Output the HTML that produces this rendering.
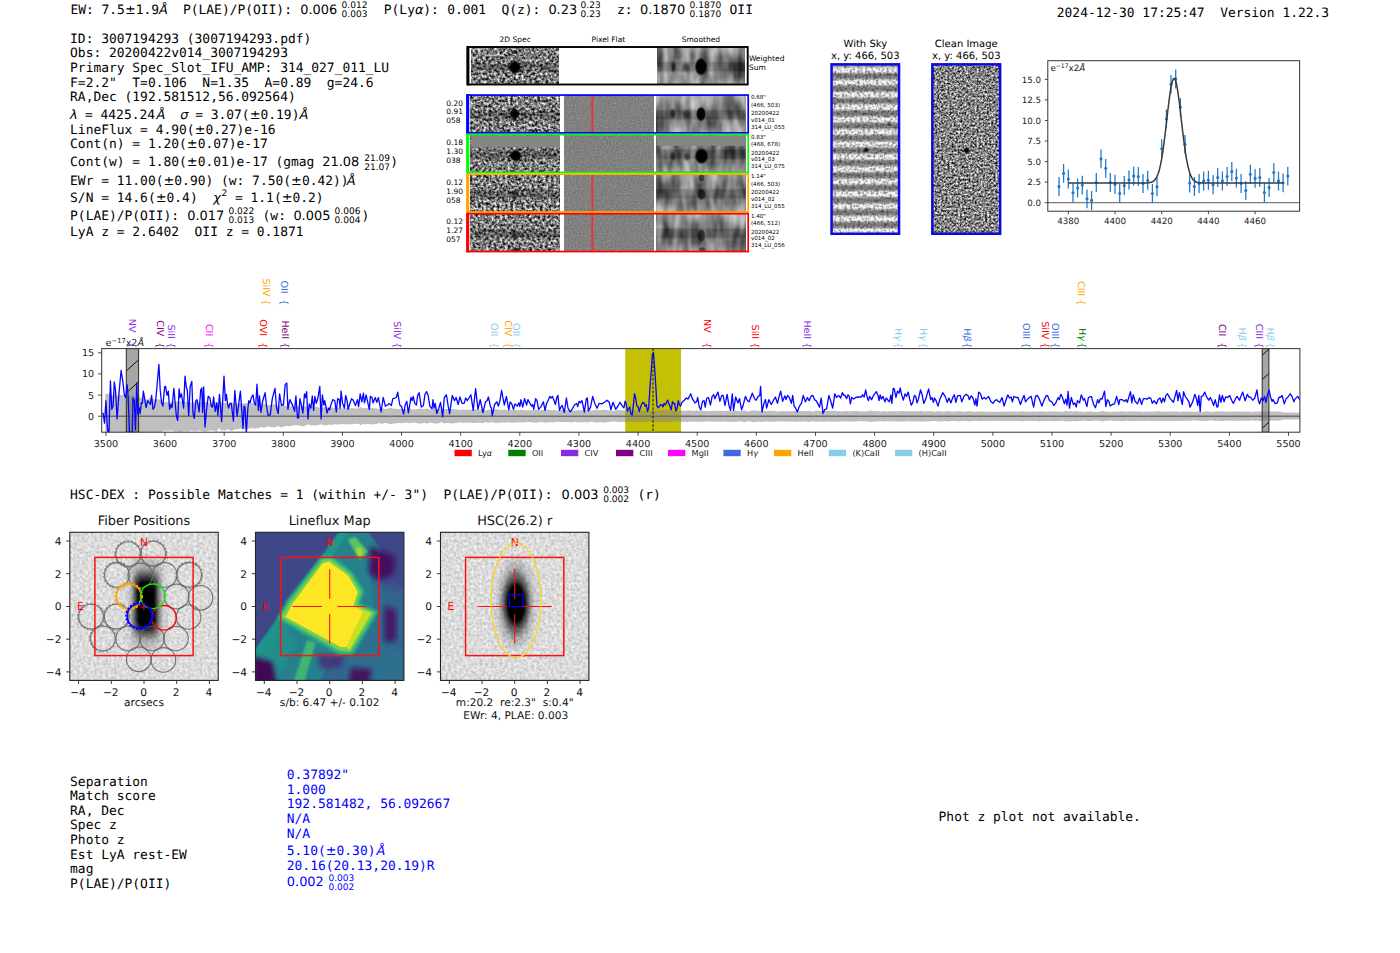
<!DOCTYPE html>
<html lang="en"><head><meta charset="utf-8"><title>ELiXer detection report 3007194293</title>
<style>
html,body{margin:0;padding:0;background:#fff;}
body{width:1400px;height:953px;overflow:hidden;}
svg{display:block;}
text{white-space:pre;text-rendering:geometricPrecision;}
</style></head><body>
<svg width="1400" height="953" viewBox="0 0 1400 953">
<defs>
<filter id="nHC" x="0" y="0" width="100%" height="100%" color-interpolation-filters="sRGB">
 <feTurbulence type="fractalNoise" baseFrequency="0.37" numOctaves="2" seed="7"/>
 <feColorMatrix type="matrix" values="1.7 0 0 0 -0.36  1.7 0 0 0 -0.36  1.7 0 0 0 -0.36  0 0 0 0 1"/><feGaussianBlur stdDeviation="0.45"/>
</filter>
<filter id="nHC2" x="0" y="0" width="100%" height="100%" color-interpolation-filters="sRGB">
 <feTurbulence type="fractalNoise" baseFrequency="0.37" numOctaves="2" seed="23"/>
 <feColorMatrix type="matrix" values="1.7 0 0 0 -0.36  1.7 0 0 0 -0.36  1.7 0 0 0 -0.36  0 0 0 0 1"/><feGaussianBlur stdDeviation="0.45"/>
</filter>
<filter id="nClean" x="0" y="0" width="100%" height="100%" color-interpolation-filters="sRGB">
 <feTurbulence type="fractalNoise" baseFrequency="0.48" numOctaves="2" seed="11"/>
 <feColorMatrix type="matrix" values="1.6 0 0 0 -0.285  1.6 0 0 0 -0.285  1.6 0 0 0 -0.285  0 0 0 0 1"/><feGaussianBlur stdDeviation="0.5"/>
</filter>
<filter id="nSm" x="0" y="0" width="100%" height="100%" color-interpolation-filters="sRGB">
 <feTurbulence type="fractalNoise" baseFrequency="0.11 0.035" numOctaves="2" seed="5"/>
 <feColorMatrix type="matrix" values="0.95 0 0 0 -0.03  0.95 0 0 0 -0.03  0.95 0 0 0 -0.03  0 0 0 0 1"/>
</filter>
<filter id="nSm2" x="0" y="0" width="100%" height="100%" color-interpolation-filters="sRGB">
 <feTurbulence type="fractalNoise" baseFrequency="0.11 0.035" numOctaves="2" seed="31"/>
 <feColorMatrix type="matrix" values="0.95 0 0 0 -0.03  0.95 0 0 0 -0.03  0.95 0 0 0 -0.03  0 0 0 0 1"/>
</filter>
<filter id="nFlat" x="0" y="0" width="100%" height="100%" color-interpolation-filters="sRGB">
 <feTurbulence type="fractalNoise" baseFrequency="0.6" numOctaves="1" seed="2"/>
 <feColorMatrix type="matrix" values="0.22 0 0 0 0.395  0.22 0 0 0 0.395  0.22 0 0 0 0.395  0 0 0 0 1"/>
</filter>
<filter id="nSky" x="0" y="0" width="100%" height="100%" color-interpolation-filters="sRGB">
 <feTurbulence type="fractalNoise" baseFrequency="0.38" numOctaves="2" seed="13"/>
 <feColorMatrix type="matrix" values="0 0 0 0 0  0 0 0 0 0  0 0 0 0 0  1.25 0 0 0 -0.52"/><feGaussianBlur stdDeviation="0.5"/>
</filter>
<filter id="nBg" x="0" y="0" width="100%" height="100%" color-interpolation-filters="sRGB">
 <feTurbulence type="fractalNoise" baseFrequency="0.35" numOctaves="2" seed="17"/>
 <feColorMatrix type="matrix" values="0.32 0 0 0 0.7  0.32 0 0 0 0.7  0.32 0 0 0 0.7  0 0 0 0 1"/>
</filter>
<filter id="nBg2" x="0" y="0" width="100%" height="100%" color-interpolation-filters="sRGB">
 <feTurbulence type="fractalNoise" baseFrequency="0.35" numOctaves="2" seed="41"/>
 <feColorMatrix type="matrix" values="0.32 0 0 0 0.7  0.32 0 0 0 0.7  0.32 0 0 0 0.7  0 0 0 0 1"/>
</filter>
<filter id="blur1" x="-20%" y="-20%" width="140%" height="140%"><feGaussianBlur stdDeviation="1.2"/></filter>
<filter id="blur2" x="-20%" y="-20%" width="140%" height="140%"><feGaussianBlur stdDeviation="2.5"/></filter>
<filter id="blur4" x="-30%" y="-30%" width="160%" height="160%"><feGaussianBlur stdDeviation="4.5"/></filter>
<linearGradient id="skyStripe" gradientUnits="userSpaceOnUse" x1="0" y1="63.6" x2="0" y2="76" spreadMethod="repeat">
 <stop offset="0" stop-color="#7e7e7e"/><stop offset="0.16" stop-color="#8c8c8c"/><stop offset="0.38" stop-color="#f6f6f6"/><stop offset="0.64" stop-color="#f6f6f6"/><stop offset="0.86" stop-color="#8c8c8c"/><stop offset="1" stop-color="#7e7e7e"/>
</linearGradient>
<radialGradient id="blob"><stop offset="0" stop-color="#000" stop-opacity="1"/><stop offset="0.38" stop-color="#000" stop-opacity="1"/><stop offset="0.6" stop-color="#000" stop-opacity="0.55"/><stop offset="0.8" stop-color="#000" stop-opacity="0.18"/><stop offset="1" stop-color="#000" stop-opacity="0"/></radialGradient>
<radialGradient id="blobS"><stop offset="0" stop-color="#000" stop-opacity="1"/><stop offset="0.7" stop-color="#000" stop-opacity="0.97"/><stop offset="1" stop-color="#000" stop-opacity="0"/></radialGradient>
<pattern id="hatch" patternUnits="userSpaceOnUse" width="12.3" height="21.2" x="126.3" y="348.6">
 <path d="M0,25.2 L12.3,14 M0,4 L12.3,-7.2 M0,46.4 L12.3,35.2" stroke="#000" stroke-width="1" fill="none"/>
</pattern>
<linearGradient id="band" x1="0" y1="0" x2="0" y2="1">
 <stop offset="0" stop-color="#fff" stop-opacity="0.28"/><stop offset="0.3" stop-color="#fff" stop-opacity="0.05"/><stop offset="0.42" stop-color="#000" stop-opacity="0.22"/><stop offset="0.62" stop-color="#000" stop-opacity="0.22"/><stop offset="0.75" stop-color="#fff" stop-opacity="0.05"/><stop offset="1" stop-color="#fff" stop-opacity="0.28"/>
</linearGradient>
<linearGradient id="band2" x1="0" y1="0" x2="0" y2="1">
 <stop offset="0.36" stop-color="#000" stop-opacity="0"/><stop offset="0.46" stop-color="#000" stop-opacity="0.25"/><stop offset="0.6" stop-color="#000" stop-opacity="0.25"/><stop offset="0.7" stop-color="#000" stop-opacity="0"/>
</linearGradient>
</defs>

<rect x="0" y="0" width="1400" height="953" fill="#fff"/>
<text x="70.40" y="14.00" font-family="'DejaVu Sans Mono','Liberation Mono',monospace" font-size="12.93" fill="#000" xml:space="preserve">EW: 7.5</text>
<text x="124.89" y="14.00" font-family="'DejaVu Sans','Liberation Sans',sans-serif" font-size="12.93" fill="#000" text-anchor="start" xml:space="preserve">±</text>
<text x="135.72" y="14.00" font-family="'DejaVu Sans Mono','Liberation Mono',monospace" font-size="12.93" fill="#000" xml:space="preserve">1.9</text>
<text x="158.90" y="14.00" font-family="'DejaVu Sans','Liberation Sans',sans-serif" font-size="12.93" fill="#000" text-anchor="start" font-style="italic" xml:space="preserve">Å</text>
<text x="183.00" y="14.00" font-family="'DejaVu Sans Mono','Liberation Mono',monospace" font-size="12.93" fill="#000" xml:space="preserve">P(LAE)/P(OII):</text>
<text x="300.20" y="14.00" font-family="'DejaVu Sans','Liberation Sans',sans-serif" font-size="12.93" fill="#000" text-anchor="start" xml:space="preserve">0.006</text>
<text x="341.60" y="8.20" font-family="'DejaVu Sans','Liberation Sans',sans-serif" font-size="9.03" fill="#000" text-anchor="start" xml:space="preserve">0.012</text>
<text x="341.60" y="17.20" font-family="'DejaVu Sans','Liberation Sans',sans-serif" font-size="9.03" fill="#000" text-anchor="start" xml:space="preserve">0.003</text>
<text x="383.80" y="14.00" font-family="'DejaVu Sans Mono','Liberation Mono',monospace" font-size="12.93" fill="#000" xml:space="preserve">P(Ly</text>
<text x="414.94" y="14.00" font-family="'DejaVu Sans','Liberation Sans',sans-serif" font-size="12.93" fill="#000" text-anchor="start" font-style="italic" xml:space="preserve">α</text>
<text x="423.34" y="14.00" font-family="'DejaVu Sans Mono','Liberation Mono',monospace" font-size="12.93" fill="#000" xml:space="preserve">):</text>
<text x="447.20" y="14.00" font-family="'DejaVu Sans Mono','Liberation Mono',monospace" font-size="12.93" fill="#000" xml:space="preserve">0.001</text>
<text x="501.40" y="14.00" font-family="'DejaVu Sans Mono','Liberation Mono',monospace" font-size="12.93" fill="#000" xml:space="preserve">Q(z):</text>
<text x="548.40" y="14.00" font-family="'DejaVu Sans','Liberation Sans',sans-serif" font-size="12.93" fill="#000" text-anchor="start" xml:space="preserve">0.23</text>
<text x="580.60" y="8.20" font-family="'DejaVu Sans','Liberation Sans',sans-serif" font-size="9.03" fill="#000" text-anchor="start" xml:space="preserve">0.23</text>
<text x="580.60" y="17.20" font-family="'DejaVu Sans','Liberation Sans',sans-serif" font-size="9.03" fill="#000" text-anchor="start" xml:space="preserve">0.23</text>
<text x="617.00" y="14.00" font-family="'DejaVu Sans Mono','Liberation Mono',monospace" font-size="12.93" fill="#000" xml:space="preserve">z:</text>
<text x="640.00" y="14.00" font-family="'DejaVu Sans','Liberation Sans',sans-serif" font-size="12.93" fill="#000" text-anchor="start" xml:space="preserve">0.1870</text>
<text x="689.60" y="8.20" font-family="'DejaVu Sans','Liberation Sans',sans-serif" font-size="9.03" fill="#000" text-anchor="start" xml:space="preserve">0.1870</text>
<text x="689.60" y="17.20" font-family="'DejaVu Sans','Liberation Sans',sans-serif" font-size="9.03" fill="#000" text-anchor="start" xml:space="preserve">0.1870</text>
<text x="729.60" y="14.00" font-family="'DejaVu Sans Mono','Liberation Mono',monospace" font-size="12.93" fill="#000" xml:space="preserve">OII</text>
<text x="1056.80" y="16.60" font-family="'DejaVu Sans Mono','Liberation Mono',monospace" font-size="12.93" fill="#000" xml:space="preserve">2024-12-30 17:25:47  Version 1.22.3</text>
<text x="70.10" y="42.50" font-family="'DejaVu Sans Mono','Liberation Mono',monospace" font-size="12.93" fill="#000" xml:space="preserve">ID: 3007194293 (3007194293.pdf)</text>
<text x="70.10" y="57.10" font-family="'DejaVu Sans Mono','Liberation Mono',monospace" font-size="12.93" fill="#000" xml:space="preserve">Obs: 20200422v014_3007194293</text>
<text x="70.10" y="71.80" font-family="'DejaVu Sans Mono','Liberation Mono',monospace" font-size="12.93" fill="#000" xml:space="preserve">Primary Spec_Slot_IFU_AMP: 314_027_011_LU</text>
<text x="70.10" y="86.50" font-family="'DejaVu Sans Mono','Liberation Mono',monospace" font-size="12.93" fill="#000" xml:space="preserve">F=2.2"  T=0.106  N=1.35  A=0.89  g=24.6</text>
<text x="70.10" y="101.20" font-family="'DejaVu Sans Mono','Liberation Mono',monospace" font-size="12.93" fill="#000" xml:space="preserve">RA,Dec (192.581512,56.092564)</text>
<text x="70.10" y="118.90" font-family="'DejaVu Sans','Liberation Sans',sans-serif" font-size="12.93" fill="#000" text-anchor="start" font-style="italic" xml:space="preserve">λ</text>
<text x="85.00" y="118.90" font-family="'DejaVu Sans Mono','Liberation Mono',monospace" font-size="12.93" fill="#000" xml:space="preserve">= 4425.24</text>
<text x="156.40" y="118.90" font-family="'DejaVu Sans','Liberation Sans',sans-serif" font-size="12.93" fill="#000" text-anchor="start" font-style="italic" xml:space="preserve">Å</text>
<text x="180.20" y="118.90" font-family="'DejaVu Sans','Liberation Sans',sans-serif" font-size="12.93" fill="#000" text-anchor="start" font-style="italic" xml:space="preserve">σ</text>
<text x="195.20" y="118.90" font-family="'DejaVu Sans Mono','Liberation Mono',monospace" font-size="12.93" fill="#000" xml:space="preserve">= 3.07(</text>
<text x="249.69" y="118.90" font-family="'DejaVu Sans','Liberation Sans',sans-serif" font-size="12.93" fill="#000" text-anchor="start" xml:space="preserve">±</text>
<text x="260.52" y="118.90" font-family="'DejaVu Sans Mono','Liberation Mono',monospace" font-size="12.93" fill="#000" xml:space="preserve">0.19)</text>
<text x="299.40" y="118.90" font-family="'DejaVu Sans','Liberation Sans',sans-serif" font-size="12.93" fill="#000" text-anchor="start" font-style="italic" xml:space="preserve">Å</text>
<text x="70.10" y="133.50" font-family="'DejaVu Sans Mono','Liberation Mono',monospace" font-size="12.93" fill="#000" xml:space="preserve">LineFlux = 4.90(</text>
<text x="194.64" y="133.50" font-family="'DejaVu Sans','Liberation Sans',sans-serif" font-size="12.93" fill="#000" text-anchor="start" xml:space="preserve">±</text>
<text x="205.48" y="133.50" font-family="'DejaVu Sans Mono','Liberation Mono',monospace" font-size="12.93" fill="#000" xml:space="preserve">0.27)e-16</text>
<text x="70.10" y="148.10" font-family="'DejaVu Sans Mono','Liberation Mono',monospace" font-size="12.93" fill="#000" xml:space="preserve">Cont(n) = 1.20(</text>
<text x="186.86" y="148.10" font-family="'DejaVu Sans','Liberation Sans',sans-serif" font-size="12.93" fill="#000" text-anchor="start" xml:space="preserve">±</text>
<text x="197.69" y="148.10" font-family="'DejaVu Sans Mono','Liberation Mono',monospace" font-size="12.93" fill="#000" xml:space="preserve">0.07)e-17</text>
<text x="70.10" y="166.30" font-family="'DejaVu Sans Mono','Liberation Mono',monospace" font-size="12.93" fill="#000" xml:space="preserve">Cont(w) = 1.80(</text>
<text x="186.86" y="166.30" font-family="'DejaVu Sans','Liberation Sans',sans-serif" font-size="12.93" fill="#000" text-anchor="start" xml:space="preserve">±</text>
<text x="197.69" y="166.30" font-family="'DejaVu Sans Mono','Liberation Mono',monospace" font-size="12.93" fill="#000" xml:space="preserve">0.01)e-17 (gmag</text>
<text x="322.20" y="166.30" font-family="'DejaVu Sans','Liberation Sans',sans-serif" font-size="12.93" fill="#000" text-anchor="start" xml:space="preserve">21.08</text>
<text x="364.20" y="160.50" font-family="'DejaVu Sans','Liberation Sans',sans-serif" font-size="9.03" fill="#000" text-anchor="start" xml:space="preserve">21.09</text>
<text x="364.20" y="169.50" font-family="'DejaVu Sans','Liberation Sans',sans-serif" font-size="9.03" fill="#000" text-anchor="start" xml:space="preserve">21.07</text>
<text x="390.20" y="166.30" font-family="'DejaVu Sans Mono','Liberation Mono',monospace" font-size="12.93" fill="#000" xml:space="preserve">)</text>
<text x="70.10" y="184.50" font-family="'DejaVu Sans Mono','Liberation Mono',monospace" font-size="12.93" fill="#000" xml:space="preserve">EWr = 11.00(</text>
<text x="163.51" y="184.50" font-family="'DejaVu Sans','Liberation Sans',sans-serif" font-size="12.93" fill="#000" text-anchor="start" xml:space="preserve">±</text>
<text x="174.34" y="184.50" font-family="'DejaVu Sans Mono','Liberation Mono',monospace" font-size="12.93" fill="#000" xml:space="preserve">0.90) (w: 7.50(</text>
<text x="291.10" y="184.50" font-family="'DejaVu Sans','Liberation Sans',sans-serif" font-size="12.93" fill="#000" text-anchor="start" xml:space="preserve">±</text>
<text x="301.93" y="184.50" font-family="'DejaVu Sans Mono','Liberation Mono',monospace" font-size="12.93" fill="#000" xml:space="preserve">0.42))</text>
<text x="346.80" y="184.50" font-family="'DejaVu Sans','Liberation Sans',sans-serif" font-size="12.93" fill="#000" text-anchor="start" font-style="italic" xml:space="preserve">Å</text>
<text x="70.10" y="202.00" font-family="'DejaVu Sans Mono','Liberation Mono',monospace" font-size="12.93" fill="#000" xml:space="preserve">S/N = 14.6(</text>
<text x="155.72" y="202.00" font-family="'DejaVu Sans','Liberation Sans',sans-serif" font-size="12.93" fill="#000" text-anchor="start" xml:space="preserve">±</text>
<text x="166.56" y="202.00" font-family="'DejaVu Sans Mono','Liberation Mono',monospace" font-size="12.93" fill="#000" xml:space="preserve">0.4)</text>
<text x="213.20" y="202.00" font-family="'DejaVu Sans','Liberation Sans',sans-serif" font-size="12.93" fill="#000" text-anchor="start" font-style="italic" xml:space="preserve">χ</text>
<text x="221.60" y="196.40" font-family="'DejaVu Sans','Liberation Sans',sans-serif" font-size="9.03" fill="#000" text-anchor="start" xml:space="preserve">2</text>
<text x="235.00" y="202.00" font-family="'DejaVu Sans Mono','Liberation Mono',monospace" font-size="12.93" fill="#000" xml:space="preserve">= 1.1(</text>
<text x="281.70" y="202.00" font-family="'DejaVu Sans','Liberation Sans',sans-serif" font-size="12.93" fill="#000" text-anchor="start" xml:space="preserve">±</text>
<text x="292.54" y="202.00" font-family="'DejaVu Sans Mono','Liberation Mono',monospace" font-size="12.93" fill="#000" xml:space="preserve">0.2)</text>
<text x="70.10" y="219.50" font-family="'DejaVu Sans Mono','Liberation Mono',monospace" font-size="12.93" fill="#000" xml:space="preserve">P(LAE)/P(OII):</text>
<text x="187.20" y="219.50" font-family="'DejaVu Sans','Liberation Sans',sans-serif" font-size="12.93" fill="#000" text-anchor="start" xml:space="preserve">0.017</text>
<text x="228.40" y="213.70" font-family="'DejaVu Sans','Liberation Sans',sans-serif" font-size="9.03" fill="#000" text-anchor="start" xml:space="preserve">0.022</text>
<text x="228.40" y="222.70" font-family="'DejaVu Sans','Liberation Sans',sans-serif" font-size="9.03" fill="#000" text-anchor="start" xml:space="preserve">0.013</text>
<text x="262.60" y="219.50" font-family="'DejaVu Sans Mono','Liberation Mono',monospace" font-size="12.93" fill="#000" xml:space="preserve">(w:</text>
<text x="293.40" y="219.50" font-family="'DejaVu Sans','Liberation Sans',sans-serif" font-size="12.93" fill="#000" text-anchor="start" xml:space="preserve">0.005</text>
<text x="334.60" y="213.70" font-family="'DejaVu Sans','Liberation Sans',sans-serif" font-size="9.03" fill="#000" text-anchor="start" xml:space="preserve">0.006</text>
<text x="334.60" y="222.70" font-family="'DejaVu Sans','Liberation Sans',sans-serif" font-size="9.03" fill="#000" text-anchor="start" xml:space="preserve">0.004</text>
<text x="361.40" y="219.50" font-family="'DejaVu Sans Mono','Liberation Mono',monospace" font-size="12.93" fill="#000" xml:space="preserve">)</text>
<text x="70.10" y="236.30" font-family="'DejaVu Sans Mono','Liberation Mono',monospace" font-size="12.93" fill="#000" xml:space="preserve">LyA z = 2.6402  OII z = 0.1871</text>
<text x="70.10" y="498.50" font-family="'DejaVu Sans Mono','Liberation Mono',monospace" font-size="12.93" fill="#000" xml:space="preserve">HSC-DEX : Possible Matches = 1 (within +/- 3")  P(LAE)/P(OII):</text>
<text x="561.60" y="498.50" font-family="'DejaVu Sans','Liberation Sans',sans-serif" font-size="12.93" fill="#000" text-anchor="start" xml:space="preserve">0.003</text>
<text x="603.20" y="492.70" font-family="'DejaVu Sans','Liberation Sans',sans-serif" font-size="9.03" fill="#000" text-anchor="start" xml:space="preserve">0.003</text>
<text x="603.20" y="501.70" font-family="'DejaVu Sans','Liberation Sans',sans-serif" font-size="9.03" fill="#000" text-anchor="start" xml:space="preserve">0.002</text>
<text x="637.40" y="498.50" font-family="'DejaVu Sans Mono','Liberation Mono',monospace" font-size="12.93" fill="#000" xml:space="preserve">(r)</text>
<text x="70.10" y="785.50" font-family="'DejaVu Sans Mono','Liberation Mono',monospace" font-size="12.93" fill="#000" xml:space="preserve">Separation</text>
<text x="70.10" y="800.15" font-family="'DejaVu Sans Mono','Liberation Mono',monospace" font-size="12.93" fill="#000" xml:space="preserve">Match score</text>
<text x="70.10" y="814.80" font-family="'DejaVu Sans Mono','Liberation Mono',monospace" font-size="12.93" fill="#000" xml:space="preserve">RA, Dec</text>
<text x="70.10" y="829.45" font-family="'DejaVu Sans Mono','Liberation Mono',monospace" font-size="12.93" fill="#000" xml:space="preserve">Spec z</text>
<text x="70.10" y="844.10" font-family="'DejaVu Sans Mono','Liberation Mono',monospace" font-size="12.93" fill="#000" xml:space="preserve">Photo z</text>
<text x="70.10" y="858.75" font-family="'DejaVu Sans Mono','Liberation Mono',monospace" font-size="12.93" fill="#000" xml:space="preserve">Est LyA rest-EW</text>
<text x="70.10" y="873.40" font-family="'DejaVu Sans Mono','Liberation Mono',monospace" font-size="12.93" fill="#000" xml:space="preserve">mag</text>
<text x="70.10" y="888.05" font-family="'DejaVu Sans Mono','Liberation Mono',monospace" font-size="12.93" fill="#000" xml:space="preserve">P(LAE)/P(OII)</text>
<text x="286.80" y="778.80" font-family="'DejaVu Sans Mono','Liberation Mono',monospace" font-size="12.93" fill="#0000ff" xml:space="preserve">0.37892"</text>
<text x="286.80" y="793.50" font-family="'DejaVu Sans Mono','Liberation Mono',monospace" font-size="12.93" fill="#0000ff" xml:space="preserve">1.000</text>
<text x="286.80" y="808.10" font-family="'DejaVu Sans Mono','Liberation Mono',monospace" font-size="12.93" fill="#0000ff" xml:space="preserve">192.581482, 56.092667</text>
<text x="286.80" y="822.70" font-family="'DejaVu Sans Mono','Liberation Mono',monospace" font-size="12.93" fill="#0000ff" xml:space="preserve">N/A</text>
<text x="286.80" y="837.90" font-family="'DejaVu Sans Mono','Liberation Mono',monospace" font-size="12.93" fill="#0000ff" xml:space="preserve">N/A</text>
<text x="286.80" y="854.50" font-family="'DejaVu Sans Mono','Liberation Mono',monospace" font-size="12.93" fill="#0000ff" xml:space="preserve">5.10(</text>
<text x="325.72" y="854.50" font-family="'DejaVu Sans','Liberation Sans',sans-serif" font-size="12.93" fill="#0000ff" text-anchor="start" xml:space="preserve">±</text>
<text x="336.55" y="854.50" font-family="'DejaVu Sans Mono','Liberation Mono',monospace" font-size="12.93" fill="#0000ff" xml:space="preserve">0.30)</text>
<text x="376.44" y="854.50" font-family="'DejaVu Sans','Liberation Sans',sans-serif" font-size="12.93" fill="#0000ff" text-anchor="start" font-style="italic" xml:space="preserve">Å</text>
<text x="286.80" y="869.50" font-family="'DejaVu Sans Mono','Liberation Mono',monospace" font-size="12.93" fill="#0000ff" xml:space="preserve">20.16(20.13,20.19)R</text>
<text x="286.80" y="886.30" font-family="'DejaVu Sans','Liberation Sans',sans-serif" font-size="12.93" fill="#0000ff" text-anchor="start" xml:space="preserve">0.002</text>
<text x="328.40" y="880.50" font-family="'DejaVu Sans','Liberation Sans',sans-serif" font-size="9.03" fill="#0000ff" text-anchor="start" xml:space="preserve">0.003</text>
<text x="328.40" y="889.50" font-family="'DejaVu Sans','Liberation Sans',sans-serif" font-size="9.03" fill="#0000ff" text-anchor="start" xml:space="preserve">0.002</text>
<text x="938.60" y="821.20" font-family="'DejaVu Sans Mono','Liberation Mono',monospace" font-size="12.93" fill="#000" xml:space="preserve">Phot z plot not available.</text>
<g id="cutouts">
<text x="515.20" y="42.00" font-family="'DejaVu Sans','Liberation Sans',sans-serif" font-size="7.5" fill="#000" text-anchor="middle" xml:space="preserve">2D Spec</text>
<text x="608.40" y="42.00" font-family="'DejaVu Sans','Liberation Sans',sans-serif" font-size="7.5" fill="#000" text-anchor="middle" xml:space="preserve">Pixel Flat</text>
<text x="700.90" y="42.00" font-family="'DejaVu Sans','Liberation Sans',sans-serif" font-size="7.5" fill="#000" text-anchor="middle" xml:space="preserve">Smoothed</text>
<text x="748.90" y="60.80" font-family="'DejaVu Sans','Liberation Sans',sans-serif" font-size="7.5" fill="#000" text-anchor="start" xml:space="preserve">Weighted</text>
<text x="748.90" y="69.70" font-family="'DejaVu Sans','Liberation Sans',sans-serif" font-size="7.5" fill="#000" text-anchor="start" xml:space="preserve">Sum</text>
<rect x="471.6" y="47.6" width="86.8" height="36.7" filter="url(#nHC)"/>
<rect x="471.6" y="47.6" width="86.8" height="36.7" fill="url(#band2)"/>
<ellipse cx="514.8" cy="67.3" rx="6.2" ry="6.8" fill="url(#blobS)" opacity="1.0"/>
<ellipse cx="514.8" cy="67.3" rx="8.5" ry="2.4" fill="url(#blobS)" opacity="0.7"/>
<ellipse cx="514.8" cy="67.3" rx="2.4" ry="9.0" fill="url(#blobS)" opacity="0.6"/>
<ellipse cx="515.0" cy="52.0" rx="2.8" ry="2.8" fill="url(#blobS)" opacity="0.6"/>
<rect x="657.8" y="47.6" width="87.0" height="36.7" filter="url(#nSm)"/>
<rect x="657.8" y="47.6" width="87.0" height="36.7" fill="url(#band)"/>
<ellipse cx="701.0" cy="66.7" rx="6.4" ry="9.4" fill="url(#blobS)" opacity="1.0"/>
<ellipse cx="673.5" cy="67.0" rx="3.4" ry="7.0" fill="url(#blob)" opacity="0.6"/>
<ellipse cx="686.0" cy="67.5" rx="5.0" ry="6.0" fill="url(#blob)" opacity="0.4"/>
<rect x="467.8" y="47.0" width="279.9" height="37.5" fill="none" stroke="#000" stroke-width="1.9"/>
<rect x="466.4" y="46.1" width="3.0" height="39.3" fill="#000"/>
<rect x="470.8" y="95.8" width="89.2" height="36.3" filter="url(#nHC2)"/>
<rect x="470.8" y="95.8" width="89.2" height="36.3" fill="url(#band2)"/>
<ellipse cx="514.6" cy="113.8" rx="5.2" ry="5.8" fill="url(#blobS)" opacity="0.9"/>
<ellipse cx="514.6" cy="113.8" rx="7.5" ry="2.2" fill="url(#blobS)" opacity="0.6"/>
<ellipse cx="514.6" cy="113.8" rx="2.2" ry="8.0" fill="url(#blobS)" opacity="0.5"/>
<rect x="564.0" y="95.8" width="89.4" height="36.3" filter="url(#nFlat)"/>
<rect x="591.4" y="95.8" width="1.9" height="36.3" fill="#f03030"/>
<rect x="573.4" y="112.7" width="0.9" height="2.2" fill="#606060"/>
<rect x="656.5" y="95.8" width="88.9" height="36.3" filter="url(#nSm2)"/>
<rect x="656.5" y="95.8" width="88.9" height="36.3" fill="url(#band)"/>
<ellipse cx="701.0" cy="114.0" rx="5.0" ry="7.6" fill="url(#blobS)" opacity="1.0"/>
<ellipse cx="673.0" cy="113.7" rx="3.4" ry="6.5" fill="url(#blob)" opacity="0.6"/>
<ellipse cx="686.5" cy="114.2" rx="5.0" ry="6.0" fill="url(#blob)" opacity="0.45"/>
<text x="446.30" y="105.50" font-family="'DejaVu Sans','Liberation Sans',sans-serif" font-size="7.5" fill="#000" text-anchor="start" xml:space="preserve">0.20</text>
<text x="446.30" y="114.45" font-family="'DejaVu Sans','Liberation Sans',sans-serif" font-size="7.5" fill="#000" text-anchor="start" xml:space="preserve">0.91</text>
<text x="446.30" y="123.40" font-family="'DejaVu Sans','Liberation Sans',sans-serif" font-size="7.5" fill="#000" text-anchor="start" xml:space="preserve">058</text>
<text x="750.90" y="99.20" font-family="'DejaVu Sans','Liberation Sans',sans-serif" font-size="5.6" fill="#000" text-anchor="start" xml:space="preserve">0.68"</text>
<text x="750.90" y="106.80" font-family="'DejaVu Sans','Liberation Sans',sans-serif" font-size="5.6" fill="#000" text-anchor="start" xml:space="preserve">(466, 503)</text>
<text x="750.90" y="115.00" font-family="'DejaVu Sans','Liberation Sans',sans-serif" font-size="5.6" fill="#000" text-anchor="start" xml:space="preserve">20200422</text>
<text x="750.90" y="121.70" font-family="'DejaVu Sans','Liberation Sans',sans-serif" font-size="5.6" fill="#000" text-anchor="start" xml:space="preserve">v014_01</text>
<text x="750.90" y="128.80" font-family="'DejaVu Sans','Liberation Sans',sans-serif" font-size="5.6" fill="#000" text-anchor="start" xml:space="preserve">314_LU_055</text>
<rect x="470.8" y="135.3" width="89.2" height="36.3" filter="url(#nHC)"/>
<rect x="470.8" y="135.3" width="89.2" height="36.3" fill="url(#band2)"/>
<rect x="470.8" y="135.3" width="89.2" height="12.2" fill="#858585"/>
<ellipse cx="515.6" cy="155.8" rx="6.0" ry="5.8" fill="url(#blobS)" opacity="1.0"/>
<ellipse cx="515.6" cy="155.8" rx="8.5" ry="2.3" fill="url(#blobS)" opacity="0.7"/>
<ellipse cx="515.6" cy="155.8" rx="2.3" ry="8.0" fill="url(#blobS)" opacity="0.5"/>
<rect x="564.0" y="135.3" width="89.4" height="36.3" filter="url(#nFlat)"/>
<rect x="656.5" y="135.3" width="88.9" height="36.3" filter="url(#nSm)"/>
<rect x="656.5" y="135.3" width="88.9" height="36.3" fill="url(#band)"/>
<rect x="656.5" y="135.3" width="88.9" height="10.5" fill="#858585"/>
<ellipse cx="701.5" cy="156.2" rx="7.0" ry="8.4" fill="url(#blobS)" opacity="1.0"/>
<ellipse cx="673.0" cy="156.2" rx="3.8" ry="6.5" fill="url(#blob)" opacity="0.55"/>
<ellipse cx="687.0" cy="156.8" rx="4.5" ry="5.5" fill="url(#blob)" opacity="0.45"/>
<text x="446.30" y="145.05" font-family="'DejaVu Sans','Liberation Sans',sans-serif" font-size="7.5" fill="#000" text-anchor="start" xml:space="preserve">0.18</text>
<text x="446.30" y="154.00" font-family="'DejaVu Sans','Liberation Sans',sans-serif" font-size="7.5" fill="#000" text-anchor="start" xml:space="preserve">1.30</text>
<text x="446.30" y="162.95" font-family="'DejaVu Sans','Liberation Sans',sans-serif" font-size="7.5" fill="#000" text-anchor="start" xml:space="preserve">038</text>
<text x="750.90" y="138.75" font-family="'DejaVu Sans','Liberation Sans',sans-serif" font-size="5.6" fill="#000" text-anchor="start" xml:space="preserve">0.83"</text>
<text x="750.90" y="146.35" font-family="'DejaVu Sans','Liberation Sans',sans-serif" font-size="5.6" fill="#000" text-anchor="start" xml:space="preserve">(468, 678)</text>
<text x="750.90" y="154.55" font-family="'DejaVu Sans','Liberation Sans',sans-serif" font-size="5.6" fill="#000" text-anchor="start" xml:space="preserve">20200422</text>
<text x="750.90" y="161.25" font-family="'DejaVu Sans','Liberation Sans',sans-serif" font-size="5.6" fill="#000" text-anchor="start" xml:space="preserve">v014_03</text>
<text x="750.90" y="168.35" font-family="'DejaVu Sans','Liberation Sans',sans-serif" font-size="5.6" fill="#000" text-anchor="start" xml:space="preserve">314_LU_075</text>
<rect x="470.8" y="174.9" width="89.2" height="36.3" filter="url(#nHC2)"/>
<rect x="470.8" y="174.9" width="89.2" height="36.3" fill="url(#band2)"/>
<ellipse cx="515.0" cy="194.3" rx="4.5" ry="4.5" fill="url(#blobS)" opacity="0.45"/>
<ellipse cx="514.5" cy="177.8" rx="3.0" ry="3.5" fill="url(#blobS)" opacity="0.35"/>
<rect x="564.0" y="174.9" width="89.4" height="36.3" filter="url(#nFlat)"/>
<rect x="591.4" y="174.9" width="1.9" height="36.3" fill="#f03030"/>
<rect x="573.4" y="191.8" width="0.9" height="2.2" fill="#606060"/>
<rect x="656.5" y="174.9" width="88.9" height="36.3" filter="url(#nSm2)"/>
<rect x="656.5" y="174.9" width="88.9" height="36.3" fill="url(#band)"/>
<ellipse cx="701.5" cy="194.3" rx="4.5" ry="6.0" fill="url(#blobS)" opacity="0.6"/>
<ellipse cx="701.5" cy="177.8" rx="3.5" ry="4.0" fill="url(#blobS)" opacity="0.5"/>
<text x="446.30" y="184.60" font-family="'DejaVu Sans','Liberation Sans',sans-serif" font-size="7.5" fill="#000" text-anchor="start" xml:space="preserve">0.12</text>
<text x="446.30" y="193.55" font-family="'DejaVu Sans','Liberation Sans',sans-serif" font-size="7.5" fill="#000" text-anchor="start" xml:space="preserve">1.90</text>
<text x="446.30" y="202.50" font-family="'DejaVu Sans','Liberation Sans',sans-serif" font-size="7.5" fill="#000" text-anchor="start" xml:space="preserve">058</text>
<text x="750.90" y="178.30" font-family="'DejaVu Sans','Liberation Sans',sans-serif" font-size="5.6" fill="#000" text-anchor="start" xml:space="preserve">1.14"</text>
<text x="750.90" y="185.90" font-family="'DejaVu Sans','Liberation Sans',sans-serif" font-size="5.6" fill="#000" text-anchor="start" xml:space="preserve">(466, 503)</text>
<text x="750.90" y="194.10" font-family="'DejaVu Sans','Liberation Sans',sans-serif" font-size="5.6" fill="#000" text-anchor="start" xml:space="preserve">20200422</text>
<text x="750.90" y="200.80" font-family="'DejaVu Sans','Liberation Sans',sans-serif" font-size="5.6" fill="#000" text-anchor="start" xml:space="preserve">v014_02</text>
<text x="750.90" y="207.90" font-family="'DejaVu Sans','Liberation Sans',sans-serif" font-size="5.6" fill="#000" text-anchor="start" xml:space="preserve">314_LU_055</text>
<rect x="470.8" y="214.4" width="89.2" height="36.3" filter="url(#nHC)"/>
<rect x="470.8" y="214.4" width="89.2" height="36.3" fill="url(#band2)"/>
<ellipse cx="515.0" cy="234.8" rx="4.0" ry="5.0" fill="url(#blobS)" opacity="0.4"/>
<ellipse cx="515.5" cy="249.8" rx="3.5" ry="3.0" fill="url(#blobS)" opacity="0.5"/>
<rect x="564.0" y="214.4" width="89.4" height="36.3" filter="url(#nFlat)"/>
<rect x="591.4" y="214.4" width="1.9" height="36.3" fill="#f03030"/>
<rect x="573.4" y="231.3" width="0.9" height="2.2" fill="#606060"/>
<rect x="656.5" y="214.4" width="88.9" height="36.3" filter="url(#nSm)"/>
<rect x="656.5" y="214.4" width="88.9" height="36.3" fill="url(#band)"/>
<ellipse cx="701.5" cy="235.8" rx="4.0" ry="7.0" fill="url(#blobS)" opacity="0.55"/>
<ellipse cx="702.0" cy="249.8" rx="3.5" ry="3.0" fill="url(#blobS)" opacity="0.5"/>
<text x="446.30" y="224.15" font-family="'DejaVu Sans','Liberation Sans',sans-serif" font-size="7.5" fill="#000" text-anchor="start" xml:space="preserve">0.12</text>
<text x="446.30" y="233.10" font-family="'DejaVu Sans','Liberation Sans',sans-serif" font-size="7.5" fill="#000" text-anchor="start" xml:space="preserve">1.27</text>
<text x="446.30" y="242.05" font-family="'DejaVu Sans','Liberation Sans',sans-serif" font-size="7.5" fill="#000" text-anchor="start" xml:space="preserve">057</text>
<text x="750.90" y="217.85" font-family="'DejaVu Sans','Liberation Sans',sans-serif" font-size="5.6" fill="#000" text-anchor="start" xml:space="preserve">1.40"</text>
<text x="750.90" y="225.45" font-family="'DejaVu Sans','Liberation Sans',sans-serif" font-size="5.6" fill="#000" text-anchor="start" xml:space="preserve">(466, 512)</text>
<text x="750.90" y="233.65" font-family="'DejaVu Sans','Liberation Sans',sans-serif" font-size="5.6" fill="#000" text-anchor="start" xml:space="preserve">20200422</text>
<text x="750.90" y="240.35" font-family="'DejaVu Sans','Liberation Sans',sans-serif" font-size="5.6" fill="#000" text-anchor="start" xml:space="preserve">v014_02</text>
<text x="750.90" y="247.45" font-family="'DejaVu Sans','Liberation Sans',sans-serif" font-size="5.6" fill="#000" text-anchor="start" xml:space="preserve">314_LU_056</text>
<rect x="467.3" y="95.05" width="280.9" height="37.85" fill="none" stroke="#0000ff" stroke-width="1.7"/>
<rect x="466.2" y="94.20" width="3.0" height="39.55" fill="#0000ff"/>
<rect x="467.3" y="134.60" width="280.9" height="37.85" fill="none" stroke="#00ff00" stroke-width="1.7"/>
<rect x="466.2" y="133.75" width="3.0" height="39.55" fill="#00ff00"/>
<rect x="467.3" y="174.15" width="280.9" height="37.85" fill="none" stroke="#ffa500" stroke-width="1.7"/>
<rect x="466.2" y="173.30" width="3.0" height="39.55" fill="#ffa500"/>
<rect x="467.3" y="213.70" width="280.9" height="37.85" fill="none" stroke="#ff0000" stroke-width="1.7"/>
<rect x="466.2" y="212.85" width="3.0" height="39.55" fill="#ff0000"/>
</g>
<g id="sky">
<text x="865.30" y="47.30" font-family="'DejaVu Sans','Liberation Sans',sans-serif" font-size="10.0" fill="#000" text-anchor="middle" xml:space="preserve">With Sky</text>
<text x="865.30" y="58.70" font-family="'DejaVu Sans','Liberation Sans',sans-serif" font-size="10.0" fill="#000" text-anchor="middle" xml:space="preserve">x, y: 466, 503</text>
<text x="966.30" y="47.30" font-family="'DejaVu Sans','Liberation Sans',sans-serif" font-size="10.0" fill="#000" text-anchor="middle" xml:space="preserve">Clean Image</text>
<text x="966.30" y="58.70" font-family="'DejaVu Sans','Liberation Sans',sans-serif" font-size="10.0" fill="#000" text-anchor="middle" xml:space="preserve">x, y: 466, 503</text>
<rect x="832.4" y="65.2" width="65.8" height="167.7" fill="url(#skyStripe)"/>
<rect x="832.4" y="65.2" width="65.8" height="167.7" filter="url(#nSky)"/>
<ellipse cx="866.2" cy="150.0" rx="3.6" ry="3.2" fill="url(#blob)" opacity="0.85"/>
<rect x="888.4" y="122.5" width="1.2" height="3.4" fill="#222"/>
<rect x="831.55" y="64.35" width="67.5" height="169.4" fill="none" stroke="#0a0ae0" stroke-width="2.5"/>
<rect x="933.2" y="65.2" width="66.1" height="167.7" filter="url(#nClean)"/>
<ellipse cx="966.6" cy="150.6" rx="4.2" ry="4.0" fill="url(#blob)" opacity="1.0"/>
<ellipse cx="958.0" cy="150.4" rx="8.0" ry="1.6" fill="url(#blob)" opacity="0.45"/>
<rect x="932.35" y="64.35" width="67.8" height="169.4" fill="none" stroke="#0a0ae0" stroke-width="2.5"/>
</g>
<g id="gauss">
<line x1="1047.8" y1="202.7" x2="1299.6" y2="202.7" stroke="#7a7a7a" stroke-width="1.3"/>
<path d="M1059.0,177.1V196.0M1063.6,163.9V182.8M1068.3,169.6V188.5M1073.0,183.4V202.3M1077.6,178.6V197.5M1082.3,175.7V194.6M1087.0,189.4V208.3M1091.6,190.9V209.9M1096.3,173.1V192.0M1101.0,149.4V168.3M1105.7,158.9V177.8M1110.3,173.1V192.0M1115.0,174.8V193.7M1119.7,184.0V202.9M1124.3,176.1V195.1M1129.0,170.6V189.5M1133.7,166.4V185.4M1138.3,167.0V185.9M1143.0,174.0V192.9M1147.7,170.8V189.7M1152.4,184.0V202.9M1157.0,177.4V196.3M1161.7,139.2V158.1M1166.4,109.4V128.3M1171.0,74.9V93.8M1175.7,69.5V88.4M1180.4,97.9V116.8M1185.0,134.9V153.8M1189.7,173.6V192.5M1194.4,177.1V196.0M1199.1,174.0V192.9M1203.7,171.5V190.4M1208.4,170.8V189.7M1213.1,175.2V194.2M1217.7,168.1V187.0M1222.4,171.5V190.4M1227.1,167.0V185.9M1231.8,162.0V180.9M1236.4,168.7V187.6M1241.1,174.0V192.9M1245.8,181.2V200.1M1250.4,164.8V183.7M1255.1,168.9V187.8M1259.8,168.1V187.0M1264.4,183.1V202.0M1269.1,178.1V197.0M1273.8,163.0V181.9M1278.5,171.5V190.4M1283.1,173.4V192.3M1287.8,166.7V185.6" stroke="#1f77c8" stroke-width="1.25" fill="none"/>
<circle cx="1059.0" cy="186.6" r="1.55" fill="#1f77c8"/>
<circle cx="1063.6" cy="173.4" r="1.55" fill="#1f77c8"/>
<circle cx="1068.3" cy="179.0" r="1.55" fill="#1f77c8"/>
<circle cx="1073.0" cy="192.8" r="1.55" fill="#1f77c8"/>
<circle cx="1077.6" cy="188.1" r="1.55" fill="#1f77c8"/>
<circle cx="1082.3" cy="185.1" r="1.55" fill="#1f77c8"/>
<circle cx="1087.0" cy="198.8" r="1.55" fill="#1f77c8"/>
<circle cx="1091.6" cy="200.4" r="1.55" fill="#1f77c8"/>
<circle cx="1096.3" cy="182.6" r="1.55" fill="#1f77c8"/>
<circle cx="1101.0" cy="158.9" r="1.55" fill="#1f77c8"/>
<circle cx="1105.7" cy="168.3" r="1.55" fill="#1f77c8"/>
<circle cx="1110.3" cy="182.6" r="1.55" fill="#1f77c8"/>
<circle cx="1115.0" cy="184.3" r="1.55" fill="#1f77c8"/>
<circle cx="1119.7" cy="193.5" r="1.55" fill="#1f77c8"/>
<circle cx="1124.3" cy="185.6" r="1.55" fill="#1f77c8"/>
<circle cx="1129.0" cy="180.0" r="1.55" fill="#1f77c8"/>
<circle cx="1133.7" cy="175.9" r="1.55" fill="#1f77c8"/>
<circle cx="1138.3" cy="176.5" r="1.55" fill="#1f77c8"/>
<circle cx="1143.0" cy="183.5" r="1.55" fill="#1f77c8"/>
<circle cx="1147.7" cy="180.3" r="1.55" fill="#1f77c8"/>
<circle cx="1152.4" cy="193.5" r="1.55" fill="#1f77c8"/>
<circle cx="1157.0" cy="186.8" r="1.55" fill="#1f77c8"/>
<circle cx="1161.7" cy="148.7" r="1.55" fill="#1f77c8"/>
<circle cx="1166.4" cy="118.9" r="1.55" fill="#1f77c8"/>
<circle cx="1171.0" cy="84.3" r="1.55" fill="#1f77c8"/>
<circle cx="1175.7" cy="78.9" r="1.55" fill="#1f77c8"/>
<circle cx="1180.4" cy="107.3" r="1.55" fill="#1f77c8"/>
<circle cx="1185.0" cy="144.3" r="1.55" fill="#1f77c8"/>
<circle cx="1189.7" cy="183.1" r="1.55" fill="#1f77c8"/>
<circle cx="1194.4" cy="186.6" r="1.55" fill="#1f77c8"/>
<circle cx="1199.1" cy="183.5" r="1.55" fill="#1f77c8"/>
<circle cx="1203.7" cy="180.9" r="1.55" fill="#1f77c8"/>
<circle cx="1208.4" cy="180.3" r="1.55" fill="#1f77c8"/>
<circle cx="1213.1" cy="184.7" r="1.55" fill="#1f77c8"/>
<circle cx="1217.7" cy="177.5" r="1.55" fill="#1f77c8"/>
<circle cx="1222.4" cy="180.9" r="1.55" fill="#1f77c8"/>
<circle cx="1227.1" cy="176.5" r="1.55" fill="#1f77c8"/>
<circle cx="1231.8" cy="171.5" r="1.55" fill="#1f77c8"/>
<circle cx="1236.4" cy="178.1" r="1.55" fill="#1f77c8"/>
<circle cx="1241.1" cy="183.5" r="1.55" fill="#1f77c8"/>
<circle cx="1245.8" cy="190.6" r="1.55" fill="#1f77c8"/>
<circle cx="1250.4" cy="174.3" r="1.55" fill="#1f77c8"/>
<circle cx="1255.1" cy="178.4" r="1.55" fill="#1f77c8"/>
<circle cx="1259.8" cy="177.5" r="1.55" fill="#1f77c8"/>
<circle cx="1264.4" cy="192.6" r="1.55" fill="#1f77c8"/>
<circle cx="1269.1" cy="187.6" r="1.55" fill="#1f77c8"/>
<circle cx="1273.8" cy="172.5" r="1.55" fill="#1f77c8"/>
<circle cx="1278.5" cy="180.9" r="1.55" fill="#1f77c8"/>
<circle cx="1283.1" cy="182.8" r="1.55" fill="#1f77c8"/>
<circle cx="1287.8" cy="176.1" r="1.55" fill="#1f77c8"/>
<polyline points="1068.3,183.0 1069.5,183.0 1070.6,183.0 1071.8,183.0 1073.0,183.0 1074.1,183.0 1075.3,183.0 1076.5,183.0 1077.6,183.0 1078.8,183.0 1080.0,183.0 1081.1,183.0 1082.3,183.0 1083.5,183.0 1084.6,183.0 1085.8,183.0 1087.0,183.0 1088.1,183.0 1089.3,183.0 1090.5,183.0 1091.6,183.0 1092.8,183.0 1094.0,183.0 1095.2,183.0 1096.3,183.0 1097.5,183.0 1098.7,183.0 1099.8,183.0 1101.0,183.0 1102.2,183.0 1103.3,183.0 1104.5,183.0 1105.7,183.0 1106.8,183.0 1108.0,183.0 1109.2,183.0 1110.3,183.0 1111.5,183.0 1112.7,183.0 1113.8,183.0 1115.0,183.0 1116.2,183.0 1117.3,183.0 1118.5,183.0 1119.7,183.0 1120.8,183.0 1122.0,183.0 1123.2,183.0 1124.3,183.0 1125.5,183.0 1126.7,183.0 1127.8,183.0 1129.0,183.0 1130.2,183.0 1131.3,183.0 1132.5,183.0 1133.7,183.0 1134.8,183.0 1136.0,183.0 1137.2,183.0 1138.3,183.0 1139.5,183.0 1140.7,183.0 1141.9,183.0 1143.0,183.0 1144.2,183.0 1145.4,182.9 1146.5,182.9 1147.7,182.8 1148.9,182.7 1150.0,182.6 1151.2,182.3 1152.4,181.8 1153.5,181.1 1154.7,180.1 1155.9,178.5 1157.0,176.4 1158.2,173.5 1159.4,169.7 1160.5,164.8 1161.7,158.7 1162.9,151.4 1164.0,142.9 1165.2,133.5 1166.4,123.5 1167.5,113.3 1168.7,103.4 1169.9,94.4 1171.0,87.0 1172.2,81.6 1173.4,78.7 1174.5,78.4 1175.7,80.8 1176.9,85.7 1178.0,92.8 1179.2,101.5 1180.4,111.2 1181.5,121.5 1182.7,131.6 1183.9,141.1 1185.0,149.8 1186.2,157.3 1187.4,163.6 1188.6,168.8 1189.7,172.8 1190.9,175.9 1192.1,178.2 1193.2,179.8 1194.4,180.9 1195.6,181.7 1196.7,182.2 1197.9,182.5 1199.1,182.7 1200.2,182.8 1201.4,182.9 1202.6,182.9 1203.7,182.9 1204.9,183.0 1206.1,183.0 1207.2,183.0 1208.4,183.0 1209.6,183.0 1210.7,183.0 1211.9,183.0 1213.1,183.0 1214.2,183.0 1215.4,183.0 1216.6,183.0 1217.7,183.0 1218.9,183.0 1220.1,183.0 1221.2,183.0 1222.4,183.0 1223.6,183.0 1224.7,183.0 1225.9,183.0 1227.1,183.0 1228.2,183.0 1229.4,183.0 1230.6,183.0 1231.8,183.0 1232.9,183.0 1234.1,183.0 1235.3,183.0 1236.4,183.0 1237.6,183.0 1238.8,183.0 1239.9,183.0 1241.1,183.0 1242.3,183.0 1243.4,183.0 1244.6,183.0 1245.8,183.0 1246.9,183.0 1248.1,183.0 1249.3,183.0 1250.4,183.0 1251.6,183.0 1252.8,183.0 1253.9,183.0 1255.1,183.0 1256.3,183.0 1257.4,183.0 1258.6,183.0 1259.8,183.0 1260.9,183.0 1262.1,183.0 1263.3,183.0 1264.4,183.0 1265.6,183.0 1266.8,183.0 1267.9,183.0 1269.1,183.0 1270.3,183.0 1271.4,183.0 1272.6,183.0 1273.8,183.0 1274.9,183.0 1276.1,183.0 1277.3,183.0 1278.5,183.0 1279.6,183.0 1280.8,183.0 1282.0,183.0 1283.1,183.0" fill="none" stroke="#3a3a3a" stroke-width="1.5" stroke-linejoin="round"/>
<rect x="1047.8" y="60.7" width="251.8" height="150.5" fill="none" stroke="#333" stroke-width="1"/>
<text x="1041.00" y="205.90" font-family="'DejaVu Sans','Liberation Sans',sans-serif" font-size="8.7" fill="#1a1a1a" text-anchor="end" xml:space="preserve">0.0</text>
<text x="1041.00" y="185.35" font-family="'DejaVu Sans','Liberation Sans',sans-serif" font-size="8.7" fill="#1a1a1a" text-anchor="end" xml:space="preserve">2.5</text>
<text x="1041.00" y="164.80" font-family="'DejaVu Sans','Liberation Sans',sans-serif" font-size="8.7" fill="#1a1a1a" text-anchor="end" xml:space="preserve">5.0</text>
<text x="1041.00" y="144.25" font-family="'DejaVu Sans','Liberation Sans',sans-serif" font-size="8.7" fill="#1a1a1a" text-anchor="end" xml:space="preserve">7.5</text>
<text x="1041.00" y="123.70" font-family="'DejaVu Sans','Liberation Sans',sans-serif" font-size="8.7" fill="#1a1a1a" text-anchor="end" xml:space="preserve">10.0</text>
<text x="1041.00" y="103.15" font-family="'DejaVu Sans','Liberation Sans',sans-serif" font-size="8.7" fill="#1a1a1a" text-anchor="end" xml:space="preserve">12.5</text>
<text x="1041.00" y="82.60" font-family="'DejaVu Sans','Liberation Sans',sans-serif" font-size="8.7" fill="#1a1a1a" text-anchor="end" xml:space="preserve">15.0</text>
<text x="1068.30" y="224.20" font-family="'DejaVu Sans','Liberation Sans',sans-serif" font-size="8.7" fill="#1a1a1a" text-anchor="middle" xml:space="preserve">4380</text>
<text x="1115.00" y="224.20" font-family="'DejaVu Sans','Liberation Sans',sans-serif" font-size="8.7" fill="#1a1a1a" text-anchor="middle" xml:space="preserve">4400</text>
<text x="1161.70" y="224.20" font-family="'DejaVu Sans','Liberation Sans',sans-serif" font-size="8.7" fill="#1a1a1a" text-anchor="middle" xml:space="preserve">4420</text>
<text x="1208.40" y="224.20" font-family="'DejaVu Sans','Liberation Sans',sans-serif" font-size="8.7" fill="#1a1a1a" text-anchor="middle" xml:space="preserve">4440</text>
<text x="1255.10" y="224.20" font-family="'DejaVu Sans','Liberation Sans',sans-serif" font-size="8.7" fill="#1a1a1a" text-anchor="middle" xml:space="preserve">4460</text>
<path d="M1047.8,202.7h-3M1047.8,182.1h-3M1047.8,161.6h-3M1047.8,141.0h-3M1047.8,120.5h-3M1047.8,99.9h-3M1047.8,79.4h-3M1068.3,211.2v3M1115.0,211.2v3M1161.7,211.2v3M1208.4,211.2v3M1255.1,211.2v3" stroke="#333" stroke-width="0.9" fill="none"/>
<text x="1050.4" y="71.3" font-family="'DejaVu Sans','Liberation Sans',sans-serif" font-size="8.7" fill="#1a1a1a" xml:space="preserve">e<tspan dy="-3.39" font-size="6.09">−17</tspan><tspan dy="3.39">x2</tspan><tspan font-style="italic">Å</tspan></text>
</g>
<g id="spectrum">
<clipPath id="spclip"><rect x="101.7" y="348.6" width="1198.2" height="83.6"/></clipPath>
<g clip-path="url(#spclip)">
<rect x="625.2" y="348.6" width="55.8" height="83.6" fill="#c4c105"/>
<polygon points="105.3,393.0 107.7,394.3 110.0,393.4 112.4,395.7 114.8,393.2 117.1,395.9 119.5,394.5 121.9,395.0 124.2,396.1 126.6,392.7 129.0,396.6 131.3,395.9 133.7,395.7 136.1,398.3 138.4,396.3 140.8,398.0 143.2,397.3 145.5,399.3 147.9,399.6 150.2,397.9 152.6,398.8 155.0,399.4 157.3,399.2 159.7,399.6 162.1,401.2 164.4,402.2 166.8,402.0 169.2,402.2 171.5,402.6 173.9,401.5 176.3,401.6 178.6,401.4 181.0,401.3 183.4,401.9 185.7,401.9 188.1,401.8 190.5,402.7 192.8,402.6 195.2,402.2 197.6,402.8 199.9,402.9 202.3,402.6 204.6,401.8 207.0,402.6 209.4,403.1 211.7,403.4 214.1,403.2 216.5,401.7 218.8,405.3 221.2,403.0 223.6,403.3 225.9,403.0 228.3,404.2 230.7,402.2 233.0,402.9 235.4,403.5 237.8,403.4 240.1,404.0 242.5,403.5 244.9,403.6 247.2,402.9 249.6,403.3 252.0,403.6 254.3,403.1 256.7,403.4 259.0,403.8 261.4,405.0 263.8,403.6 266.1,405.1 268.5,405.2 270.9,404.8 273.2,404.6 275.6,404.3 278.0,406.2 280.3,404.6 282.7,404.7 285.1,405.9 287.4,405.9 289.8,406.2 292.2,406.3 294.5,406.7 296.9,407.0 299.3,406.4 301.6,406.2 304.0,405.5 306.4,407.0 308.7,407.6 311.1,406.6 313.4,407.0 315.8,406.7 318.2,407.2 320.5,407.7 322.9,407.5 325.3,406.9 327.6,407.2 330.0,407.9 332.4,407.2 334.7,408.3 337.1,408.0 339.5,407.8 341.8,408.5 344.2,408.5 346.6,408.0 348.9,408.1 351.3,408.2 353.7,408.3 356.0,408.6 358.4,408.5 360.8,407.0 363.1,408.5 365.5,407.7 367.8,408.5 370.2,407.8 372.6,407.9 374.9,408.2 377.3,408.7 379.7,409.0 382.0,408.1 384.4,409.0 386.8,409.1 389.1,408.0 391.5,408.1 393.9,408.7 396.2,408.8 398.6,409.0 401.0,408.7 403.3,409.0 405.7,409.4 408.1,409.1 410.4,408.8 412.8,409.5 415.1,409.3 417.5,408.9 419.9,408.4 422.2,409.0 424.6,409.0 427.0,408.4 429.3,409.5 431.7,409.4 434.1,408.8 436.4,408.8 438.8,409.0 441.2,410.1 443.5,409.0 445.9,409.0 448.3,409.3 450.6,409.1 453.0,408.9 455.4,409.4 457.7,409.7 460.1,410.0 462.5,409.4 464.8,409.7 467.2,409.7 469.5,409.9 471.9,409.4 474.3,409.3 476.6,409.4 479.0,409.9 481.4,409.3 483.7,409.5 486.1,410.4 488.5,409.4 490.8,410.3 493.2,410.0 495.6,409.3 497.9,409.5 500.3,409.9 502.7,410.0 505.0,409.6 507.4,410.3 509.8,409.7 512.1,409.9 514.5,409.6 516.9,409.9 519.2,410.2 521.6,409.8 523.9,410.0 526.3,410.3 528.7,410.3 531.0,410.2 533.4,409.9 535.8,409.7 538.1,409.9 540.5,410.3 542.9,410.1 545.2,409.8 547.6,409.6 550.0,410.3 552.3,409.9 554.7,410.1 557.1,410.7 559.4,410.4 561.8,410.2 564.2,410.2 566.5,410.2 568.9,410.3 571.3,410.0 573.6,410.4 576.0,410.6 578.3,410.0 580.7,410.3 583.1,409.9 585.4,410.4 587.8,409.8 590.2,410.5 592.5,410.5 594.9,410.0 597.3,409.7 599.6,410.4 602.0,409.7 604.4,409.8 606.7,410.0 609.1,410.3 611.5,410.9 613.8,410.7 616.2,410.5 618.6,410.1 620.9,410.3 623.3,410.5 625.7,410.3 628.0,410.8 630.4,410.2 632.7,410.6 635.1,410.0 637.5,410.3 639.8,410.6 642.2,410.5 644.6,410.9 646.9,410.4 649.3,410.7 651.7,410.5 654.0,410.1 656.4,410.4 658.8,410.3 661.1,409.7 663.5,410.3 665.9,410.2 668.2,410.6 670.6,410.9 673.0,410.5 675.3,410.9 677.7,411.4 680.1,410.4 682.4,410.5 684.8,410.9 687.1,410.2 689.5,410.6 691.9,410.7 694.2,410.9 696.6,410.3 699.0,410.8 701.3,410.8 703.7,410.8 706.1,410.9 708.4,411.2 710.8,410.9 713.2,411.0 715.5,410.5 717.9,411.1 720.3,410.6 722.6,410.9 725.0,411.0 727.4,410.8 729.7,410.8 732.1,410.8 734.5,410.7 736.8,410.8 739.2,411.3 741.5,411.0 743.9,410.4 746.3,410.9 748.6,411.5 751.0,410.8 753.4,410.4 755.7,410.6 758.1,410.9 760.5,410.9 762.8,410.8 765.2,411.0 767.6,411.1 769.9,410.5 772.3,411.1 774.7,410.7 777.0,411.4 779.4,411.2 781.8,411.3 784.1,410.9 786.5,411.2 788.9,411.2 791.2,411.2 793.6,411.0 795.9,410.8 798.3,411.2 800.7,410.9 803.0,411.0 805.4,411.2 807.8,411.0 810.1,410.7 812.5,411.7 814.9,410.9 817.2,410.6 819.6,411.1 822.0,410.9 824.3,410.8 826.7,411.0 829.1,411.0 831.4,410.8 833.8,410.8 836.2,411.1 838.5,411.0 840.9,411.4 843.3,411.2 845.6,411.1 848.0,411.2 850.3,411.3 852.7,410.9 855.1,411.1 857.4,411.0 859.8,411.5 862.2,411.3 864.5,411.4 866.9,411.3 869.3,410.8 871.6,410.6 874.0,411.2 876.4,411.1 878.7,411.3 881.1,411.4 883.5,411.0 885.8,411.4 888.2,411.5 890.6,411.1 892.9,411.3 895.3,411.2 897.7,411.2 900.0,411.1 902.4,411.1 904.7,411.1 907.1,411.3 909.5,411.3 911.8,411.2 914.2,411.3 916.6,411.2 918.9,411.3 921.3,410.8 923.7,411.4 926.0,411.2 928.4,411.3 930.8,411.1 933.1,411.6 935.5,411.7 937.9,411.1 940.2,411.2 942.6,411.4 945.0,411.6 947.3,411.1 949.7,411.3 952.1,411.6 954.4,411.6 956.8,411.6 959.1,411.1 961.5,411.5 963.9,411.7 966.2,411.6 968.6,411.2 971.0,411.3 973.3,411.7 975.7,411.8 978.1,411.6 980.4,411.4 982.8,411.6 985.2,411.7 987.5,411.5 989.9,411.7 992.3,411.8 994.6,411.9 997.0,411.8 999.4,411.7 1001.7,411.5 1004.1,411.5 1006.4,411.7 1008.8,411.3 1011.2,411.8 1013.5,411.3 1015.9,411.8 1018.3,411.6 1020.6,411.4 1023.0,411.3 1025.4,411.7 1027.7,411.5 1030.1,411.8 1032.5,411.6 1034.8,411.4 1037.2,411.7 1039.6,411.2 1041.9,411.4 1044.3,411.4 1046.7,411.7 1049.0,411.6 1051.4,411.5 1053.8,411.3 1056.1,411.4 1058.5,411.6 1060.8,411.7 1063.2,411.8 1065.6,411.0 1067.9,411.3 1070.3,411.2 1072.7,411.6 1075.0,411.1 1077.4,411.4 1079.8,411.5 1082.1,411.7 1084.5,411.9 1086.9,411.4 1089.2,411.5 1091.6,411.5 1094.0,411.9 1096.3,412.0 1098.7,411.8 1101.1,411.3 1103.4,411.1 1105.8,411.7 1108.2,411.6 1110.5,411.9 1112.9,411.8 1115.2,411.5 1117.6,411.7 1120.0,411.5 1122.3,411.3 1124.7,411.6 1127.1,411.8 1129.4,411.2 1131.8,411.4 1134.2,411.5 1136.5,411.5 1138.9,411.6 1141.3,411.4 1143.6,411.9 1146.0,411.6 1148.4,411.8 1150.7,411.6 1153.1,411.4 1155.5,411.6 1157.8,411.1 1160.2,411.6 1162.6,411.7 1164.9,411.5 1167.3,411.5 1169.6,411.5 1172.0,411.5 1174.4,411.6 1176.7,411.3 1179.1,411.9 1181.5,411.4 1183.8,411.7 1186.2,411.6 1188.6,411.8 1190.9,411.3 1193.3,412.0 1195.7,411.8 1198.0,411.6 1200.4,411.4 1202.8,411.9 1205.1,411.4 1207.5,411.3 1209.9,411.8 1212.2,412.1 1214.6,411.4 1217.0,411.6 1219.3,411.6 1221.7,411.3 1224.0,411.4 1226.4,411.7 1228.8,411.5 1231.1,411.8 1233.5,411.4 1235.9,411.6 1238.2,411.4 1240.6,411.7 1243.0,411.5 1245.3,411.5 1247.7,411.4 1250.1,411.5 1252.4,412.0 1254.8,411.4 1257.2,411.8 1259.5,411.3 1261.9,411.6 1264.3,411.5 1266.6,411.7 1269.0,411.1 1271.4,411.8 1273.7,411.4 1276.1,411.5 1278.4,411.3 1280.8,411.8 1283.2,412.2 1285.5,412.5 1287.9,412.5 1290.3,412.7 1292.6,412.2 1295.0,412.5 1297.4,412.8 1299.7,412.6 1302.1,412.8 1302.1,419.2 1299.7,419.4 1297.4,419.2 1295.0,419.5 1292.6,419.7 1290.3,419.3 1287.9,419.5 1285.5,419.5 1283.2,419.8 1280.8,420.2 1278.4,420.7 1276.1,420.6 1273.7,420.7 1271.4,420.4 1269.0,421.0 1266.6,420.5 1264.3,420.7 1261.9,420.7 1259.5,420.9 1257.2,420.4 1254.8,420.8 1252.4,420.2 1250.1,420.7 1247.7,420.8 1245.3,420.8 1243.0,420.7 1240.6,420.6 1238.2,420.8 1235.9,420.7 1233.5,420.8 1231.1,420.5 1228.8,420.8 1226.4,420.6 1224.0,420.9 1221.7,421.0 1219.3,420.7 1217.0,420.7 1214.6,420.9 1212.2,420.2 1209.9,420.6 1207.5,421.0 1205.1,420.9 1202.8,420.5 1200.4,420.9 1198.0,420.7 1195.7,420.5 1193.3,420.3 1190.9,421.1 1188.6,420.6 1186.2,420.8 1183.8,420.7 1181.5,421.0 1179.1,420.5 1176.7,421.1 1174.4,420.8 1172.0,420.9 1169.6,420.9 1167.3,420.9 1164.9,420.9 1162.6,420.7 1160.2,420.9 1157.8,421.3 1155.5,420.8 1153.1,421.0 1150.7,420.9 1148.4,420.6 1146.0,420.9 1143.6,420.6 1141.3,421.0 1138.9,420.8 1136.5,421.0 1134.2,420.9 1131.8,421.0 1129.4,421.3 1127.1,420.6 1124.7,420.9 1122.3,421.2 1120.0,420.9 1117.6,420.7 1115.2,421.0 1112.9,420.7 1110.5,420.6 1108.2,420.8 1105.8,420.8 1103.4,421.4 1101.1,421.1 1098.7,420.7 1096.3,420.5 1094.0,420.6 1091.6,420.9 1089.2,421.0 1086.9,421.1 1084.5,420.6 1082.1,420.8 1079.8,421.0 1077.4,421.1 1075.0,421.4 1072.7,420.9 1070.3,421.3 1067.9,421.2 1065.6,421.5 1063.2,420.7 1060.8,420.8 1058.5,420.9 1056.1,421.2 1053.8,421.2 1051.4,421.1 1049.0,421.0 1046.7,420.9 1044.3,421.2 1041.9,421.1 1039.6,421.4 1037.2,420.9 1034.8,421.1 1032.5,421.0 1030.1,420.7 1027.7,421.0 1025.4,420.8 1023.0,421.2 1020.6,421.2 1018.3,421.0 1015.9,420.8 1013.5,421.3 1011.2,420.7 1008.8,421.3 1006.4,420.8 1004.1,421.1 1001.7,421.1 999.4,420.9 997.0,420.8 994.6,420.7 992.3,420.8 989.9,420.9 987.5,421.1 985.2,420.9 982.8,421.0 980.4,421.2 978.1,421.0 975.7,420.8 973.3,420.9 971.0,421.3 968.6,421.4 966.2,421.0 963.9,420.9 961.5,421.1 959.1,421.5 956.8,421.0 954.4,421.1 952.1,421.0 949.7,421.3 947.3,421.5 945.0,421.0 942.6,421.3 940.2,421.4 937.9,421.5 935.5,420.9 933.1,421.0 930.8,421.6 928.4,421.3 926.0,421.4 923.7,421.2 921.3,421.8 918.9,421.4 916.6,421.4 914.2,421.3 911.8,421.4 909.5,421.3 907.1,421.3 904.7,421.5 902.4,421.5 900.0,421.6 897.7,421.4 895.3,421.4 892.9,421.3 890.6,421.5 888.2,421.1 885.8,421.2 883.5,421.6 881.1,421.2 878.7,421.3 876.4,421.5 874.0,421.4 871.6,422.0 869.3,421.8 866.9,421.4 864.5,421.2 862.2,421.3 859.8,421.1 857.4,421.6 855.1,421.5 852.7,421.8 850.3,421.3 848.0,421.4 845.6,421.5 843.3,421.4 840.9,421.2 838.5,421.7 836.2,421.5 833.8,421.8 831.4,421.8 829.1,421.6 826.7,421.6 824.3,421.8 822.0,421.7 819.6,421.5 817.2,422.0 814.9,421.7 812.5,420.9 810.1,421.9 807.8,421.7 805.4,421.4 803.0,421.6 800.7,421.7 798.3,421.4 795.9,421.9 793.6,421.6 791.2,421.4 788.9,421.4 786.5,421.4 784.1,421.7 781.8,421.3 779.4,421.4 777.0,421.2 774.7,421.9 772.3,421.5 769.9,422.1 767.6,421.5 765.2,421.6 762.8,421.9 760.5,421.7 758.1,421.7 755.7,422.0 753.4,422.2 751.0,421.8 748.6,421.1 746.3,421.7 743.9,422.2 741.5,421.5 739.2,421.3 736.8,421.8 734.5,421.9 732.1,421.8 729.7,421.8 727.4,421.7 725.0,421.5 722.6,421.6 720.3,422.0 717.9,421.4 715.5,422.0 713.2,421.5 710.8,421.6 708.4,421.3 706.1,421.6 703.7,421.7 701.3,421.7 699.0,421.7 696.6,422.1 694.2,421.5 691.9,421.7 689.5,421.8 687.1,422.2 684.8,421.5 682.4,421.9 680.1,422.0 677.7,421.0 675.3,421.5 673.0,421.9 670.6,421.5 668.2,421.8 665.9,422.2 663.5,422.1 661.1,422.6 658.8,422.0 656.4,422.0 654.0,422.2 651.7,421.9 649.3,421.6 646.9,421.9 644.6,421.4 642.2,421.7 639.8,421.7 637.5,422.0 635.1,422.3 632.7,421.7 630.4,422.1 628.0,421.5 625.7,422.0 623.3,421.8 620.9,421.9 618.6,422.2 616.2,421.8 613.8,421.6 611.5,421.4 609.1,422.0 606.7,422.3 604.4,422.5 602.0,422.6 599.6,421.9 597.3,422.7 594.9,422.3 592.5,421.8 590.2,421.8 587.8,422.6 585.4,421.9 583.1,422.4 580.7,422.0 578.3,422.4 576.0,421.8 573.6,422.0 571.3,422.4 568.9,422.1 566.5,422.2 564.2,422.1 561.8,422.1 559.4,421.9 557.1,421.7 554.7,422.2 552.3,422.5 550.0,422.1 547.6,422.7 545.2,422.6 542.9,422.3 540.5,422.1 538.1,422.4 535.8,422.7 533.4,422.5 531.0,422.2 528.7,422.1 526.3,422.1 523.9,422.4 521.6,422.6 519.2,422.2 516.9,422.5 514.5,422.8 512.1,422.5 509.8,422.7 507.4,422.1 505.0,422.8 502.7,422.4 500.3,422.5 497.9,422.9 495.6,423.1 493.2,422.4 490.8,422.1 488.5,423.0 486.1,422.0 483.7,422.9 481.4,423.1 479.0,422.5 476.6,423.0 474.3,423.1 471.9,423.0 469.5,422.5 467.2,422.7 464.8,422.7 462.5,423.0 460.1,422.3 457.7,422.7 455.4,423.0 453.0,423.5 450.6,423.2 448.3,423.0 445.9,423.2 443.5,423.3 441.2,422.1 438.8,423.2 436.4,423.4 434.1,423.4 431.7,422.8 429.3,422.7 427.0,423.8 424.6,423.1 422.2,423.2 419.9,423.7 417.5,423.2 415.1,422.8 412.8,422.6 410.4,423.2 408.1,422.9 405.7,422.6 403.3,423.0 401.0,423.3 398.6,423.0 396.2,423.2 393.9,423.4 391.5,423.9 389.1,424.0 386.8,423.0 384.4,423.1 382.0,424.0 379.7,423.1 377.3,423.5 374.9,423.9 372.6,424.3 370.2,424.4 367.8,423.7 365.5,424.5 363.1,423.8 360.8,425.2 358.4,423.8 356.0,423.7 353.7,424.0 351.3,424.2 348.9,424.3 346.6,424.4 344.2,423.9 341.8,423.9 339.5,424.6 337.1,424.4 334.7,424.1 332.4,425.1 330.0,424.4 327.6,425.0 325.3,425.4 322.9,424.8 320.5,424.6 318.2,425.0 315.8,425.5 313.4,425.2 311.1,425.5 308.7,424.6 306.4,425.1 304.0,426.6 301.6,425.9 299.3,425.7 296.9,425.1 294.5,425.3 292.2,425.8 289.8,425.9 287.4,426.1 285.1,426.1 282.7,427.2 280.3,427.3 278.0,425.8 275.6,427.5 273.2,427.2 270.9,427.0 268.5,426.6 266.1,426.7 263.8,428.0 261.4,426.7 259.0,427.9 256.7,428.2 254.3,428.4 252.0,428.1 249.6,428.6 247.2,429.1 244.9,428.6 242.5,428.9 240.1,428.6 237.8,429.3 235.4,429.3 233.0,430.2 230.7,431.1 228.3,429.1 225.9,430.6 223.6,430.3 221.2,430.6 218.8,428.1 216.5,432.0 214.1,430.4 211.7,430.2 209.4,430.4 207.0,431.0 204.6,431.8 202.3,430.9 199.9,430.6 197.6,430.6 195.2,431.2 192.8,430.7 190.5,430.6 188.1,431.5 185.7,431.3 183.4,431.3 181.0,431.9 178.6,431.8 176.3,431.5 173.9,431.4 171.5,430.3 169.2,430.7 166.8,430.9 164.4,430.5 162.1,431.4 159.7,432.9 157.3,433.1 155.0,432.7 152.6,433.2 150.2,434.0 147.9,432.3 145.5,432.6 143.2,434.5 140.8,433.7 138.4,435.2 136.1,433.1 133.7,435.4 131.3,435.0 129.0,434.3 126.6,437.7 124.2,434.5 121.9,435.3 119.5,435.6 117.1,434.3 114.8,436.8 112.4,434.6 110.0,436.7 107.7,436.0 105.3,437.4" fill="#808080" fill-opacity="0.5"/>
<line x1="101.7" y1="416.2" x2="1299.9" y2="416.2" stroke="#6e6e6e" stroke-width="1.4"/>
<rect x="126.3" y="348.6" width="12.3" height="83.6" fill="#707070" fill-opacity="0.62" stroke="#2a2a2a" stroke-width="1"/>
<path d="M126.3,348.9L138.6,337.8M126.3,370.9L138.6,359.8M126.3,392.9L138.6,381.8" stroke="#111" stroke-width="1" fill="none"/>
<rect x="1262.2" y="348.6" width="6.7" height="83.6" fill="#707070" fill-opacity="0.62" stroke="#2a2a2a" stroke-width="1"/>
<path d="M1262.2,355.2L1269.0,349.1M1262.2,379.5L1269.0,373.4M1262.2,428.2L1269.0,422.1" stroke="#111" stroke-width="1" fill="none"/>
<polyline points="101.6,413.0 103.2,413.6 104.5,423.2 105.9,400.7 107.3,426.4 108.8,439.3 110.4,380.9 111.8,409.3 113.1,406.1 114.3,382.0 115.5,390.0 117.1,418.9 118.8,395.4 121.1,370.5 122.7,380.4 124.4,395.4 125.7,397.5 127.1,384.6 128.1,395.4 129.5,432.9 130.3,440.4 132.1,440.4 133.0,398.0 134.3,401.3 135.4,429.6 136.8,383.0 137.8,414.6 139.1,407.7 140.2,413.6 141.3,402.9 142.3,403.4 143.4,391.1 144.8,399.6 146.1,407.7 147.7,400.7 149.3,402.9 150.4,404.5 151.6,395.4 153.0,409.3 154.4,407.1 155.7,400.7 157.3,382.5 158.9,364.3 160.2,390.0 161.6,402.9 162.9,406.1 164.6,386.8 165.6,386.3 167.0,395.4 168.3,391.1 169.6,409.3 170.9,404.5 172.0,407.7 173.9,388.4 175.0,400.7 176.3,415.7 177.7,420.5 179.1,388.9 180.1,397.5 181.4,393.8 182.5,400.7 183.6,408.2 185.0,376.1 186.3,387.3 187.3,390.0 188.7,415.7 190.2,386.3 191.8,381.4 193.0,413.6 194.3,418.4 195.9,400.7 197.0,399.6 198.0,405.0 199.1,412.0 200.7,390.0 201.8,387.9 202.6,412.5 203.7,386.8 205.0,427.0 206.6,409.3 208.2,396.4 209.8,397.5 211.4,406.6 212.5,407.1 213.6,397.0 215.2,411.4 216.8,402.9 217.9,415.2 219.5,394.3 221.6,421.6 224.0,376.1 225.4,400.7 226.4,394.3 227.5,403.9 228.6,408.2 229.9,403.4 231.3,403.4 233.4,421.1 234.8,390.5 237.1,416.3 240.4,391.1 243.0,428.6 244.1,406.1 245.0,407.1 246.3,433.9 247.7,410.4 248.8,400.7 250.1,402.9 251.4,397.5 253.0,394.8 254.4,403.4 255.7,405.0 257.0,384.1 258.4,410.4 259.5,395.9 260.9,412.5 262.7,400.7 265.1,392.7 266.4,405.0 268.0,415.2 270.2,415.2 272.3,398.6 275.0,388.4 276.6,408.2 278.2,413.6 279.6,393.8 281.4,405.0 283.4,405.0 285.2,384.6 286.8,383.0 287.9,409.3 289.8,399.6 291.6,403.4 293.2,406.6 294.6,411.4 295.9,395.9 297.5,417.9 298.6,417.9 299.9,398.6 301.3,405.0 302.9,413.0 304.5,393.8 305.5,397.5 306.6,391.6 308.0,418.9 309.3,403.9 310.9,408.2 312.3,395.9 313.6,410.4 314.9,396.4 316.3,403.4 317.9,398.0 319.8,386.3 321.1,418.9 322.4,394.8 323.8,405.0 324.8,400.7 327.0,413.0 328.6,408.2 329.6,409.8 331.3,403.4 332.9,399.6 334.8,400.7 336.3,412.0 337.7,398.6 339.3,399.6 340.1,408.2 341.1,391.1 342.5,402.9 344.4,408.2 345.7,395.4 347.0,400.7 348.1,409.3 349.5,404.5 351.6,398.6 353.2,400.2 355.4,405.5 357.5,399.6 358.6,406.6 360.2,393.8 361.8,401.8 363.4,393.2 364.5,402.9 366.1,394.8 369.3,409.3 370.4,396.4 372.0,397.5 373.0,402.9 375.2,397.5 376.8,402.3 378.4,397.5 381.1,412.0 383.2,397.5 385.4,406.1 387.5,405.0 389.1,403.4 391.3,405.5 392.9,398.6 395.0,398.0 396.3,397.5 397.7,392.1 399.8,405.0 401.6,406.6 403.6,414.1 405.2,405.0 406.8,401.3 408.4,413.0 410.9,397.5 412.1,400.7 413.2,396.4 414.8,403.4 416.4,405.0 417.7,395.4 419.1,392.7 421.3,407.1 423.4,405.5 425.0,394.3 426.6,391.6 428.2,395.4 429.8,406.1 432.0,408.8 433.0,399.6 434.1,408.2 435.2,403.4 436.8,413.6 438.9,408.2 440.5,402.3 442.7,416.8 444.3,397.5 446.4,394.8 448.0,405.0 449.6,413.6 452.3,395.4 454.5,400.7 456.1,397.5 458.2,404.5 460.0,397.0 462.0,403.4 464.1,403.4 465.7,398.0 467.3,400.7 468.9,398.0 470.9,394.8 473.2,410.4 475.6,388.7 478.0,409.3 480.2,399.6 482.9,412.5 485.5,401.8 487.1,400.7 488.4,397.0 490.4,406.6 491.4,408.2 492.3,415.7 494.6,404.5 496.8,401.8 498.4,406.1 499.8,401.3 501.6,390.5 504.3,405.0 506.4,396.4 508.8,409.8 510.2,401.8 511.8,403.9 513.4,409.3 515.0,403.9 517.1,406.1 518.8,402.9 519.8,406.6 520.9,399.6 522.7,407.1 524.6,398.6 526.6,405.0 527.9,399.6 530.0,403.4 531.6,406.1 532.7,404.5 533.8,409.3 535.6,398.6 537.0,400.7 538.6,409.3 540.7,407.1 543.4,401.8 545.0,410.4 546.6,403.4 548.2,400.2 549.8,396.4 551.2,398.0 552.5,396.4 554.1,400.7 555.4,404.5 556.8,397.5 557.9,395.4 559.5,410.4 561.1,406.6 562.1,405.5 564.3,412.5 566.4,398.0 568.0,408.2 570.2,412.0 572.3,408.8 574.5,405.0 576.6,403.4 577.7,406.6 579.1,401.3 580.4,402.9 582.0,400.7 584.4,412.0 586.3,398.6 587.3,398.0 588.4,410.9 590.5,407.1 592.7,396.4 594.8,403.4 597.0,408.2 599.1,403.4 601.8,403.9 604.5,402.3 607.1,400.2 609.3,402.3 610.9,409.8 613.0,402.3 615.7,409.3 617.9,406.1 620.0,402.3 622.7,406.6 623.9,407.9 625.1,401.1 626.2,404.0 627.4,411.1 628.6,408.7 629.8,407.1 631.0,414.2 632.2,415.0 633.3,405.8 634.5,393.7 635.7,398.5 636.9,405.8 638.1,406.7 639.3,411.5 640.4,407.4 641.6,404.5 642.8,402.4 644.0,402.7 645.2,406.3 646.3,404.7 647.5,411.5 648.7,408.0 649.9,388.4 651.1,373.1 652.3,355.3 653.4,352.5 654.6,367.1 655.8,386.2 657.0,406.1 658.2,407.9 659.4,406.3 660.5,405.0 661.7,404.7 662.9,406.9 664.1,403.3 665.3,405.0 666.5,402.7 667.6,400.1 668.8,403.6 670.0,406.3 671.2,410.0 672.4,401.6 673.5,403.7 674.7,403.3 675.9,411.0 677.1,408.4 678.3,400.6 679.5,405.0 680.6,406.0 681.8,402.5 684.3,400.2 686.4,398.0 688.0,399.1 690.7,393.8 692.3,398.6 695.0,402.9 696.6,401.8 697.7,397.5 699.3,407.1 700.9,409.8 702.5,401.3 704.1,400.7 705.2,407.1 706.8,398.0 708.4,397.5 710.5,405.0 712.1,396.4 713.8,394.8 714.8,398.6 716.4,395.4 718.0,392.1 719.9,401.3 721.8,395.4 723.1,395.4 725.0,405.5 727.1,394.3 729.1,406.1 730.6,410.4 732.3,393.8 733.6,410.4 735.7,397.0 737.9,402.9 739.5,398.6 741.6,409.8 743.2,405.0 745.4,396.4 747.5,400.7 749.1,401.8 750.7,397.5 752.3,393.2 754.5,398.6 756.1,400.2 758.2,396.4 759.8,395.4 760.6,386.3 762.0,412.0 764.1,402.9 765.5,399.6 766.6,408.2 768.9,399.6 771.3,404.5 773.2,400.7 775.4,397.0 777.5,403.4 779.1,396.4 780.7,391.1 782.6,401.3 784.8,395.9 786.1,399.6 787.4,395.4 789.3,397.5 791.4,403.4 792.7,395.4 794.1,406.1 795.7,408.2 797.3,412.0 799.5,406.1 801.6,402.9 803.2,395.4 805.4,401.8 807.5,397.5 809.1,400.7 811.3,395.9 812.9,395.4 814.5,399.6 816.1,400.7 817.7,403.4 819.5,407.1 821.2,398.0 823.0,413.6 824.9,409.3 826.6,408.8 828.9,395.4 830.9,401.8 832.7,408.2 834.8,393.8 836.4,397.5 838.6,395.4 840.7,398.0 842.3,392.7 843.9,395.4 845.0,395.4 846.6,398.6 848.0,394.8 849.3,396.4 850.4,403.9 851.6,397.5 853.6,399.1 855.7,397.5 858.4,397.0 861.1,397.0 862.7,394.8 864.1,397.0 865.7,390.0 867.0,396.4 868.4,400.7 869.6,396.4 871.6,399.6 873.9,394.8 876.4,391.6 878.0,395.4 879.1,400.7 880.1,394.8 881.4,399.1 883.0,396.4 884.9,401.8 886.3,398.0 887.9,400.2 889.5,401.8 890.9,394.8 891.9,403.4 893.2,388.4 894.3,388.9 895.9,397.5 897.5,391.1 899.1,393.2 900.2,387.9 901.8,395.4 903.4,400.2 905.0,393.8 906.6,396.4 908.2,392.1 909.8,399.6 911.2,405.0 912.7,402.9 914.4,395.4 915.7,396.4 917.0,402.9 918.4,399.1 920.5,390.0 922.1,394.8 923.8,403.4 925.9,398.6 928.6,388.9 930.7,399.6 932.0,397.5 933.4,402.3 934.5,398.0 936.1,400.7 938.0,406.1 939.8,399.6 942.7,392.7 945.2,396.4 947.3,402.3 948.9,398.0 950.9,402.9 952.7,397.5 954.3,394.8 955.9,402.3 957.5,395.9 960.2,395.4 961.8,401.8 963.9,396.4 966.1,394.3 968.2,395.9 969.3,399.6 971.2,395.9 973.0,398.0 974.9,405.0 975.9,398.6 977.0,406.1 978.7,392.1 980.5,393.8 982.1,399.1 984.3,397.5 985.9,399.1 988.4,396.4 990.7,401.3 992.9,403.4 995.0,400.7 996.6,399.6 998.2,401.3 999.8,402.3 1002.0,397.5 1004.1,406.1 1005.7,400.7 1007.9,394.8 1009.5,398.0 1011.1,397.0 1012.4,401.8 1013.8,396.4 1015.9,397.5 1018.0,397.5 1020.5,404.5 1022.6,398.6 1024.1,395.4 1025.5,401.8 1027.1,399.6 1029.3,397.5 1031.2,396.4 1033.6,407.1 1035.5,396.4 1037.3,395.4 1039.1,398.6 1041.9,406.1 1044.3,399.6 1046.4,395.4 1047.7,395.9 1049.6,400.7 1051.8,401.8 1053.7,405.5 1055.5,403.4 1058.2,397.5 1059.3,399.6 1060.9,394.3 1062.5,397.5 1064.4,403.9 1065.7,399.1 1067.0,405.0 1068.1,391.3 1069.5,408.2 1071.3,397.5 1073.4,404.5 1074.8,402.9 1076.2,407.1 1077.5,400.7 1079.6,402.9 1081.3,394.8 1083.4,400.2 1084.5,398.6 1086.9,406.6 1088.4,397.5 1091.4,396.4 1093.6,404.5 1095.5,407.7 1097.6,399.6 1098.9,402.9 1100.5,398.6 1102.1,399.1 1104.5,391.1 1105.9,406.6 1107.3,399.6 1108.8,401.3 1110.2,406.1 1112.3,404.5 1114.5,403.9 1116.6,396.4 1118.8,404.5 1119.8,399.6 1122.0,399.6 1124.6,401.3 1125.9,399.6 1127.3,402.3 1130.5,391.6 1131.9,402.9 1133.2,394.8 1135.1,401.3 1137.5,403.9 1139.6,398.0 1141.6,404.5 1143.4,398.6 1145.0,398.6 1147.1,399.1 1149.3,397.5 1150.9,398.6 1152.3,403.4 1154.1,400.7 1156.3,403.9 1158.1,399.6 1160.0,398.0 1161.6,402.9 1163.0,398.0 1164.5,401.8 1165.9,395.4 1167.5,393.8 1170.2,398.6 1173.4,402.3 1175.0,396.4 1176.6,390.5 1178.0,400.7 1179.3,392.7 1180.9,398.6 1182.3,404.5 1183.6,391.6 1185.2,396.4 1187.3,399.1 1188.9,401.8 1190.0,407.1 1191.9,403.4 1193.4,399.6 1194.8,394.3 1196.4,398.6 1197.7,405.5 1198.8,395.4 1200.2,411.4 1201.3,396.4 1202.9,395.9 1204.8,392.1 1206.3,396.4 1208.8,400.2 1210.4,397.5 1212.3,401.8 1213.6,405.5 1215.2,399.6 1217.0,407.1 1217.9,406.6 1219.5,394.8 1220.9,402.3 1222.4,395.4 1224.1,401.8 1225.6,397.0 1227.5,397.5 1229.6,395.4 1231.6,400.2 1233.4,403.4 1236.1,397.5 1237.1,396.4 1239.5,400.2 1240.9,396.4 1242.7,392.1 1245.2,400.7 1247.3,394.3 1249.1,397.5 1250.5,397.0 1252.7,400.2 1254.8,398.0 1257.0,390.0 1258.4,400.7 1259.6,403.9 1261.3,398.0 1262.9,400.7 1264.5,396.4 1265.9,402.3 1267.1,396.4 1269.1,390.0 1270.4,396.4 1272.0,401.3 1273.0,399.6 1275.2,403.7 1277.3,402.9 1278.9,397.5 1280.9,397.0 1282.1,395.4 1284.3,403.9 1285.9,399.1 1288.0,397.0 1290.2,393.8 1292.0,396.4 1293.9,401.8 1295.0,399.1 1297.7,396.4 1300.4,400.7" fill="none" stroke="#0505ff" stroke-width="1.3" stroke-linejoin="round"/>
<line x1="653.0" y1="348.6" x2="653.0" y2="432.2" stroke="#111" stroke-width="1" stroke-dasharray="2.6,1.6"/>
</g>
<rect x="101.7" y="348.6" width="1198.2" height="83.6" fill="none" stroke="#333" stroke-width="1"/>
<text x="94.10" y="419.70" font-family="'DejaVu Sans','Liberation Sans',sans-serif" font-size="9.6" fill="#1a1a1a" text-anchor="end" xml:space="preserve">0</text>
<text x="94.10" y="398.55" font-family="'DejaVu Sans','Liberation Sans',sans-serif" font-size="9.6" fill="#1a1a1a" text-anchor="end" xml:space="preserve">5</text>
<text x="94.10" y="377.40" font-family="'DejaVu Sans','Liberation Sans',sans-serif" font-size="9.6" fill="#1a1a1a" text-anchor="end" xml:space="preserve">10</text>
<text x="94.10" y="356.25" font-family="'DejaVu Sans','Liberation Sans',sans-serif" font-size="9.6" fill="#1a1a1a" text-anchor="end" xml:space="preserve">15</text>
<text x="105.90" y="446.50" font-family="'DejaVu Sans','Liberation Sans',sans-serif" font-size="9.6" fill="#1a1a1a" text-anchor="middle" xml:space="preserve">3500</text>
<text x="165.03" y="446.50" font-family="'DejaVu Sans','Liberation Sans',sans-serif" font-size="9.6" fill="#1a1a1a" text-anchor="middle" xml:space="preserve">3600</text>
<text x="224.16" y="446.50" font-family="'DejaVu Sans','Liberation Sans',sans-serif" font-size="9.6" fill="#1a1a1a" text-anchor="middle" xml:space="preserve">3700</text>
<text x="283.29" y="446.50" font-family="'DejaVu Sans','Liberation Sans',sans-serif" font-size="9.6" fill="#1a1a1a" text-anchor="middle" xml:space="preserve">3800</text>
<text x="342.42" y="446.50" font-family="'DejaVu Sans','Liberation Sans',sans-serif" font-size="9.6" fill="#1a1a1a" text-anchor="middle" xml:space="preserve">3900</text>
<text x="401.55" y="446.50" font-family="'DejaVu Sans','Liberation Sans',sans-serif" font-size="9.6" fill="#1a1a1a" text-anchor="middle" xml:space="preserve">4000</text>
<text x="460.68" y="446.50" font-family="'DejaVu Sans','Liberation Sans',sans-serif" font-size="9.6" fill="#1a1a1a" text-anchor="middle" xml:space="preserve">4100</text>
<text x="519.81" y="446.50" font-family="'DejaVu Sans','Liberation Sans',sans-serif" font-size="9.6" fill="#1a1a1a" text-anchor="middle" xml:space="preserve">4200</text>
<text x="578.94" y="446.50" font-family="'DejaVu Sans','Liberation Sans',sans-serif" font-size="9.6" fill="#1a1a1a" text-anchor="middle" xml:space="preserve">4300</text>
<text x="638.07" y="446.50" font-family="'DejaVu Sans','Liberation Sans',sans-serif" font-size="9.6" fill="#1a1a1a" text-anchor="middle" xml:space="preserve">4400</text>
<text x="697.20" y="446.50" font-family="'DejaVu Sans','Liberation Sans',sans-serif" font-size="9.6" fill="#1a1a1a" text-anchor="middle" xml:space="preserve">4500</text>
<text x="756.33" y="446.50" font-family="'DejaVu Sans','Liberation Sans',sans-serif" font-size="9.6" fill="#1a1a1a" text-anchor="middle" xml:space="preserve">4600</text>
<text x="815.46" y="446.50" font-family="'DejaVu Sans','Liberation Sans',sans-serif" font-size="9.6" fill="#1a1a1a" text-anchor="middle" xml:space="preserve">4700</text>
<text x="874.59" y="446.50" font-family="'DejaVu Sans','Liberation Sans',sans-serif" font-size="9.6" fill="#1a1a1a" text-anchor="middle" xml:space="preserve">4800</text>
<text x="933.72" y="446.50" font-family="'DejaVu Sans','Liberation Sans',sans-serif" font-size="9.6" fill="#1a1a1a" text-anchor="middle" xml:space="preserve">4900</text>
<text x="992.85" y="446.50" font-family="'DejaVu Sans','Liberation Sans',sans-serif" font-size="9.6" fill="#1a1a1a" text-anchor="middle" xml:space="preserve">5000</text>
<text x="1051.98" y="446.50" font-family="'DejaVu Sans','Liberation Sans',sans-serif" font-size="9.6" fill="#1a1a1a" text-anchor="middle" xml:space="preserve">5100</text>
<text x="1111.11" y="446.50" font-family="'DejaVu Sans','Liberation Sans',sans-serif" font-size="9.6" fill="#1a1a1a" text-anchor="middle" xml:space="preserve">5200</text>
<text x="1170.24" y="446.50" font-family="'DejaVu Sans','Liberation Sans',sans-serif" font-size="9.6" fill="#1a1a1a" text-anchor="middle" xml:space="preserve">5300</text>
<text x="1229.37" y="446.50" font-family="'DejaVu Sans','Liberation Sans',sans-serif" font-size="9.6" fill="#1a1a1a" text-anchor="middle" xml:space="preserve">5400</text>
<text x="1288.50" y="446.50" font-family="'DejaVu Sans','Liberation Sans',sans-serif" font-size="9.6" fill="#1a1a1a" text-anchor="middle" xml:space="preserve">5500</text>
<path d="M101.7,416.2h-3.6M101.7,395.1h-3.6M101.7,373.9h-3.6M101.7,352.8h-3.6M105.9,432.2v3.6M165.0,432.2v3.6M224.2,432.2v3.6M283.3,432.2v3.6M342.4,432.2v3.6M401.6,432.2v3.6M460.7,432.2v3.6M519.8,432.2v3.6M578.9,432.2v3.6M638.1,432.2v3.6M697.2,432.2v3.6M756.3,432.2v3.6M815.5,432.2v3.6M874.6,432.2v3.6M933.7,432.2v3.6M992.9,432.2v3.6M1052.0,432.2v3.6M1111.1,432.2v3.6M1170.2,432.2v3.6M1229.4,432.2v3.6M1288.5,432.2v3.6" stroke="#333" stroke-width="0.9" fill="none"/>
<text x="105.6" y="346.4" font-family="'DejaVu Sans','Liberation Sans',sans-serif" font-size="9.6" fill="#1a1a1a" xml:space="preserve">e<tspan dy="-3.74" font-size="6.72">−17</tspan><tspan dy="3.74">x2</tspan><tspan font-style="italic">Å</tspan></text>
<text transform="translate(129.0,318.8) rotate(90)" font-family="'DejaVu Sans','Liberation Sans',sans-serif" font-size="9.6" fill="#8a2be2">NV</text>
<text transform="translate(129.0,342.3) rotate(90)" font-family="'DejaVu Sans','Liberation Sans',sans-serif" font-size="9.6" fill="#8a2be2">{</text>
<text transform="translate(157.3,320.2) rotate(90)" font-family="'DejaVu Sans','Liberation Sans',sans-serif" font-size="9.6" fill="#800080">CIV</text>
<text transform="translate(157.3,342.3) rotate(90)" font-family="'DejaVu Sans','Liberation Sans',sans-serif" font-size="9.6" fill="#800080">{</text>
<text transform="translate(167.8,324.4) rotate(90)" font-family="'DejaVu Sans','Liberation Sans',sans-serif" font-size="9.6" fill="#8a2be2">SiII</text>
<text transform="translate(167.8,342.3) rotate(90)" font-family="'DejaVu Sans','Liberation Sans',sans-serif" font-size="9.6" fill="#8a2be2">{</text>
<text transform="translate(206.0,323.9) rotate(90)" font-family="'DejaVu Sans','Liberation Sans',sans-serif" font-size="9.6" fill="#ff00ff">CII</text>
<text transform="translate(206.0,342.3) rotate(90)" font-family="'DejaVu Sans','Liberation Sans',sans-serif" font-size="9.6" fill="#ff00ff">{</text>
<text transform="translate(260.3,319.3) rotate(90)" font-family="'DejaVu Sans','Liberation Sans',sans-serif" font-size="9.6" fill="#ff0000">OVI</text>
<text transform="translate(260.3,342.3) rotate(90)" font-family="'DejaVu Sans','Liberation Sans',sans-serif" font-size="9.6" fill="#ff0000">{</text>
<text transform="translate(282.0,320.4) rotate(90)" font-family="'DejaVu Sans','Liberation Sans',sans-serif" font-size="9.6" fill="#800080">HeII</text>
<text transform="translate(282.0,342.3) rotate(90)" font-family="'DejaVu Sans','Liberation Sans',sans-serif" font-size="9.6" fill="#800080">{</text>
<text transform="translate(393.9,321.2) rotate(90)" font-family="'DejaVu Sans','Liberation Sans',sans-serif" font-size="9.6" fill="#8a2be2">SiIV</text>
<text transform="translate(393.9,342.3) rotate(90)" font-family="'DejaVu Sans','Liberation Sans',sans-serif" font-size="9.6" fill="#8a2be2">{</text>
<text transform="translate(491.2,323.1) rotate(90)" font-family="'DejaVu Sans','Liberation Sans',sans-serif" font-size="9.6" fill="#87ceeb">OII</text>
<text transform="translate(491.2,342.3) rotate(90)" font-family="'DejaVu Sans','Liberation Sans',sans-serif" font-size="9.6" fill="#87ceeb">{</text>
<text transform="translate(504.5,320.2) rotate(90)" font-family="'DejaVu Sans','Liberation Sans',sans-serif" font-size="9.6" fill="#ffa500">CIV</text>
<text transform="translate(504.5,342.3) rotate(90)" font-family="'DejaVu Sans','Liberation Sans',sans-serif" font-size="9.6" fill="#ffa500">{</text>
<text transform="translate(513.2,323.1) rotate(90)" font-family="'DejaVu Sans','Liberation Sans',sans-serif" font-size="9.6" fill="#87ceeb">OII</text>
<text transform="translate(513.2,342.3) rotate(90)" font-family="'DejaVu Sans','Liberation Sans',sans-serif" font-size="9.6" fill="#87ceeb">{</text>
<text transform="translate(704.0,319.1) rotate(90)" font-family="'DejaVu Sans','Liberation Sans',sans-serif" font-size="9.6" fill="#ff0000">NV</text>
<text transform="translate(704.0,342.3) rotate(90)" font-family="'DejaVu Sans','Liberation Sans',sans-serif" font-size="9.6" fill="#ff0000">{</text>
<text transform="translate(752.0,324.6) rotate(90)" font-family="'DejaVu Sans','Liberation Sans',sans-serif" font-size="9.6" fill="#ff0000">SiII</text>
<text transform="translate(752.0,342.3) rotate(90)" font-family="'DejaVu Sans','Liberation Sans',sans-serif" font-size="9.6" fill="#ff0000">{</text>
<text transform="translate(803.5,320.4) rotate(90)" font-family="'DejaVu Sans','Liberation Sans',sans-serif" font-size="9.6" fill="#8a2be2">HeII</text>
<text transform="translate(803.5,342.3) rotate(90)" font-family="'DejaVu Sans','Liberation Sans',sans-serif" font-size="9.6" fill="#8a2be2">{</text>
<text transform="translate(894.8,328.0) rotate(90)" font-family="'DejaVu Sans','Liberation Sans',sans-serif" font-size="9.6" fill="#87ceeb">H<tspan font-style="italic">γ</tspan></text>
<text transform="translate(894.8,342.3) rotate(90)" font-family="'DejaVu Sans','Liberation Sans',sans-serif" font-size="9.6" fill="#87ceeb">{</text>
<text transform="translate(920.0,328.0) rotate(90)" font-family="'DejaVu Sans','Liberation Sans',sans-serif" font-size="9.6" fill="#87ceeb">H<tspan font-style="italic">γ</tspan></text>
<text transform="translate(920.0,342.3) rotate(90)" font-family="'DejaVu Sans','Liberation Sans',sans-serif" font-size="9.6" fill="#87ceeb">{</text>
<text transform="translate(964.3,328.2) rotate(90)" font-family="'DejaVu Sans','Liberation Sans',sans-serif" font-size="9.6" fill="#4169e1">H<tspan font-style="italic">β</tspan></text>
<text transform="translate(964.3,342.3) rotate(90)" font-family="'DejaVu Sans','Liberation Sans',sans-serif" font-size="9.6" fill="#4169e1">{</text>
<text transform="translate(1022.5,323.1) rotate(90)" font-family="'DejaVu Sans','Liberation Sans',sans-serif" font-size="9.6" fill="#4169e1">OIII</text>
<text transform="translate(1022.5,342.3) rotate(90)" font-family="'DejaVu Sans','Liberation Sans',sans-serif" font-size="9.6" fill="#4169e1">{</text>
<text transform="translate(1041.7,321.2) rotate(90)" font-family="'DejaVu Sans','Liberation Sans',sans-serif" font-size="9.6" fill="#ff0000">SiIV</text>
<text transform="translate(1041.7,342.3) rotate(90)" font-family="'DejaVu Sans','Liberation Sans',sans-serif" font-size="9.6" fill="#ff0000">{</text>
<text transform="translate(1051.5,323.1) rotate(90)" font-family="'DejaVu Sans','Liberation Sans',sans-serif" font-size="9.6" fill="#4169e1">OIII</text>
<text transform="translate(1051.5,342.3) rotate(90)" font-family="'DejaVu Sans','Liberation Sans',sans-serif" font-size="9.6" fill="#4169e1">{</text>
<text transform="translate(1079.1,328.0) rotate(90)" font-family="'DejaVu Sans','Liberation Sans',sans-serif" font-size="9.6" fill="#008000">H<tspan font-style="italic">γ</tspan></text>
<text transform="translate(1079.1,342.3) rotate(90)" font-family="'DejaVu Sans','Liberation Sans',sans-serif" font-size="9.6" fill="#008000">{</text>
<text transform="translate(1219.2,323.9) rotate(90)" font-family="'DejaVu Sans','Liberation Sans',sans-serif" font-size="9.6" fill="#800080">CII</text>
<text transform="translate(1219.2,342.3) rotate(90)" font-family="'DejaVu Sans','Liberation Sans',sans-serif" font-size="9.6" fill="#800080">{</text>
<text transform="translate(1238.5,327.6) rotate(90)" font-family="'DejaVu Sans','Liberation Sans',sans-serif" font-size="9.6" fill="#87ceeb">H<tspan font-style="italic">β</tspan></text>
<text transform="translate(1238.5,342.3) rotate(90)" font-family="'DejaVu Sans','Liberation Sans',sans-serif" font-size="9.6" fill="#87ceeb">{</text>
<text transform="translate(1256.3,323.8) rotate(90)" font-family="'DejaVu Sans','Liberation Sans',sans-serif" font-size="9.6" fill="#8a2be2">CIII</text>
<text transform="translate(1256.3,342.3) rotate(90)" font-family="'DejaVu Sans','Liberation Sans',sans-serif" font-size="9.6" fill="#8a2be2">{</text>
<text transform="translate(1267.0,327.6) rotate(90)" font-family="'DejaVu Sans','Liberation Sans',sans-serif" font-size="9.6" fill="#87ceeb">H<tspan font-style="italic">β</tspan></text>
<text transform="translate(1267.0,342.3) rotate(90)" font-family="'DejaVu Sans','Liberation Sans',sans-serif" font-size="9.6" fill="#87ceeb">{</text>
<text transform="translate(262.8,278.4) rotate(90)" font-family="'DejaVu Sans','Liberation Sans',sans-serif" font-size="9.6" fill="#ffa500">SiIV</text>
<text transform="translate(262.8,299.2) rotate(90)" font-family="'DejaVu Sans','Liberation Sans',sans-serif" font-size="9.6" fill="#ffa500">{</text>
<text transform="translate(280.8,280.4) rotate(90)" font-family="'DejaVu Sans','Liberation Sans',sans-serif" font-size="9.6" fill="#4169e1">OII</text>
<text transform="translate(280.8,299.2) rotate(90)" font-family="'DejaVu Sans','Liberation Sans',sans-serif" font-size="9.6" fill="#4169e1">{</text>
<text transform="translate(1078.1,281.0) rotate(90)" font-family="'DejaVu Sans','Liberation Sans',sans-serif" font-size="9.6" fill="#ffa500">CIII</text>
<text transform="translate(1078.1,299.2) rotate(90)" font-family="'DejaVu Sans','Liberation Sans',sans-serif" font-size="9.6" fill="#ffa500">{</text>
<rect x="454.5" y="449.8" width="17.3" height="6.4" fill="#ff0000"/>
<text x="478.1" y="455.6" font-family="'DejaVu Sans','Liberation Sans',sans-serif" font-size="8.2" fill="#1a1a1a">Ly<tspan font-style="italic">α</tspan></text>
<rect x="508.3" y="449.8" width="17.3" height="6.4" fill="#008000"/>
<text x="531.9" y="455.6" font-family="'DejaVu Sans','Liberation Sans',sans-serif" font-size="8.2" fill="#1a1a1a">OII</text>
<rect x="561.0" y="449.8" width="17.3" height="6.4" fill="#8a2be2"/>
<text x="584.6" y="455.6" font-family="'DejaVu Sans','Liberation Sans',sans-serif" font-size="8.2" fill="#1a1a1a">CIV</text>
<rect x="616.0" y="449.8" width="17.3" height="6.4" fill="#800080"/>
<text x="639.6" y="455.6" font-family="'DejaVu Sans','Liberation Sans',sans-serif" font-size="8.2" fill="#1a1a1a">CIII</text>
<rect x="668.0" y="449.8" width="17.3" height="6.4" fill="#ff00ff"/>
<text x="691.6" y="455.6" font-family="'DejaVu Sans','Liberation Sans',sans-serif" font-size="8.2" fill="#1a1a1a">MgII</text>
<rect x="723.4" y="449.8" width="17.3" height="6.4" fill="#4169e1"/>
<text x="747.0" y="455.6" font-family="'DejaVu Sans','Liberation Sans',sans-serif" font-size="8.2" fill="#1a1a1a">H<tspan font-style="italic">γ</tspan></text>
<rect x="774.0" y="449.8" width="17.3" height="6.4" fill="#ffa500"/>
<text x="797.6" y="455.6" font-family="'DejaVu Sans','Liberation Sans',sans-serif" font-size="8.2" fill="#1a1a1a">HeII</text>
<rect x="828.8" y="449.8" width="17.3" height="6.4" fill="#87ceeb"/>
<text x="852.4" y="455.6" font-family="'DejaVu Sans','Liberation Sans',sans-serif" font-size="8.2" fill="#1a1a1a">(K)CaII</text>
<rect x="895.0" y="449.8" width="17.3" height="6.4" fill="#87ceeb"/>
<text x="918.6" y="455.6" font-family="'DejaVu Sans','Liberation Sans',sans-serif" font-size="8.2" fill="#1a1a1a">(H)CaII</text>
</g>
<g id="p1">
<clipPath id="c1"><rect x="69.8" y="532.3" width="148.4" height="148.1"/></clipPath>
<g clip-path="url(#c1)">
<rect x="69.8" y="532.3" width="148.4" height="148.1" filter="url(#nBg)"/>
<rect x="130.2" y="560.0" width="32.0" height="88.0" rx="8.8" ry="14.1" fill="#000" opacity="0.22" filter="url(#blur4)"/>
<rect x="133.9" y="570.8" width="24.6" height="66.5" rx="6.8" ry="10.8" fill="#000" opacity="0.42" filter="url(#blur2)"/>
<rect x="135.4" y="577.0" width="21.5" height="54.0" rx="5.9" ry="9.5" fill="#000" opacity="0.7" filter="url(#blur2)"/>
<rect x="137.6" y="581.5" width="17.2" height="45.0" rx="4.7" ry="7.6" fill="#000" opacity="1.0" filter="url(#blur1)"/>
</g>
<circle cx="128.1" cy="554.1" r="12.3" fill="none" stroke="#666" stroke-width="1.1" stroke-opacity="0.9"/>
<circle cx="128.1" cy="554.1" r="13.200000000000001" fill="none" stroke="#7a7a7a" stroke-width="1.3" stroke-opacity="0.8" stroke-dasharray="2.2,1.6"/>
<circle cx="153.3" cy="553.6" r="12.3" fill="none" stroke="#666" stroke-width="1.1" stroke-opacity="0.9"/>
<circle cx="153.3" cy="553.6" r="13.200000000000001" fill="none" stroke="#7a7a7a" stroke-width="1.3" stroke-opacity="0.8" stroke-dasharray="2.2,1.6"/>
<circle cx="116.8" cy="574.9" r="12.3" fill="none" stroke="#666" stroke-width="1.1" stroke-opacity="0.9"/>
<circle cx="116.8" cy="574.9" r="13.200000000000001" fill="none" stroke="#7a7a7a" stroke-width="1.3" stroke-opacity="0.8" stroke-dasharray="2.2,1.6"/>
<circle cx="140.3" cy="575.4" r="12.3" fill="none" stroke="#666" stroke-width="1.1" stroke-opacity="0.9"/>
<circle cx="164.6" cy="574.9" r="12.3" fill="none" stroke="#666" stroke-width="1.1" stroke-opacity="0.9"/>
<circle cx="189.2" cy="574.9" r="12.3" fill="none" stroke="#666" stroke-width="1.1" stroke-opacity="0.9"/>
<circle cx="189.2" cy="574.9" r="13.200000000000001" fill="none" stroke="#7a7a7a" stroke-width="1.3" stroke-opacity="0.8" stroke-dasharray="2.2,1.6"/>
<circle cx="176.6" cy="596.4" r="12.3" fill="none" stroke="#666" stroke-width="1.1" stroke-opacity="0.9"/>
<circle cx="200.5" cy="597.8" r="12.3" fill="none" stroke="#666" stroke-width="1.1" stroke-opacity="0.9"/>
<circle cx="91.0" cy="616.6" r="12.3" fill="none" stroke="#666" stroke-width="1.1" stroke-opacity="0.9"/>
<circle cx="91.0" cy="616.6" r="13.200000000000001" fill="none" stroke="#7a7a7a" stroke-width="1.3" stroke-opacity="0.8" stroke-dasharray="2.2,1.6"/>
<circle cx="116.6" cy="616.6" r="12.3" fill="none" stroke="#666" stroke-width="1.1" stroke-opacity="0.9"/>
<circle cx="116.6" cy="616.6" r="13.200000000000001" fill="none" stroke="#7a7a7a" stroke-width="1.3" stroke-opacity="0.8" stroke-dasharray="2.2,1.6"/>
<circle cx="188.6" cy="617.0" r="12.3" fill="none" stroke="#666" stroke-width="1.1" stroke-opacity="0.9"/>
<circle cx="102.9" cy="638.5" r="12.3" fill="none" stroke="#666" stroke-width="1.1" stroke-opacity="0.9"/>
<circle cx="102.9" cy="638.5" r="13.200000000000001" fill="none" stroke="#7a7a7a" stroke-width="1.3" stroke-opacity="0.8" stroke-dasharray="2.2,1.6"/>
<circle cx="128.1" cy="638.5" r="12.3" fill="none" stroke="#666" stroke-width="1.1" stroke-opacity="0.9"/>
<circle cx="152.0" cy="638.5" r="12.3" fill="none" stroke="#666" stroke-width="1.1" stroke-opacity="0.9"/>
<circle cx="176.0" cy="638.5" r="12.3" fill="none" stroke="#666" stroke-width="1.1" stroke-opacity="0.9"/>
<circle cx="138.8" cy="659.3" r="12.3" fill="none" stroke="#666" stroke-width="1.1" stroke-opacity="0.9"/>
<circle cx="163.4" cy="659.9" r="12.3" fill="none" stroke="#666" stroke-width="1.1" stroke-opacity="0.9"/>
<rect x="94.9" y="557.4" width="98.2" height="98.2" fill="none" stroke="#ff1010" stroke-width="1.5"/>
<text x="144.00" y="545.90" font-family="'DejaVu Sans','Liberation Sans',sans-serif" font-size="10.8" fill="#ff0000" text-anchor="middle" xml:space="preserve">N</text>
<text x="80.30" y="610.35" font-family="'DejaVu Sans','Liberation Sans',sans-serif" font-size="10.8" fill="#ff0000" text-anchor="middle" xml:space="preserve">E</text>
<circle cx="164.0" cy="617.8" r="12.3" fill="none" stroke="#ff0000" stroke-width="1.4"/>
<circle cx="128.8" cy="596.3" r="12.3" fill="none" stroke="#ffa500" stroke-width="1.4"/>
<circle cx="128.8" cy="596.3" r="13.3" fill="none" stroke="#ffa500" stroke-width="1.8" stroke-dasharray="2.2,1.5"/>
<circle cx="152.7" cy="596.3" r="12.3" fill="none" stroke="#00ee00" stroke-width="1.4"/>
<circle cx="139.5" cy="615.9" r="12.3" fill="none" stroke="#0000ff" stroke-width="1.4"/>
<circle cx="139.5" cy="615.9" r="13.3" fill="none" stroke="#0000ff" stroke-width="1.8" stroke-dasharray="2.2,1.5"/>
<path d="M141.0,607H146.8M143.9,604.1V609.9" stroke="#ff0000" stroke-width="1.1"/>
<rect x="69.8" y="532.3" width="148.4" height="148.1" fill="none" stroke="#222" stroke-width="1.1"/>
<text x="78.06" y="695.70" font-family="'DejaVu Sans','Liberation Sans',sans-serif" font-size="10.6" fill="#111" text-anchor="middle" xml:space="preserve">−4</text>
<text x="61.40" y="675.79" font-family="'DejaVu Sans','Liberation Sans',sans-serif" font-size="10.6" fill="#111" text-anchor="end" xml:space="preserve">−4</text>
<text x="110.78" y="695.70" font-family="'DejaVu Sans','Liberation Sans',sans-serif" font-size="10.6" fill="#111" text-anchor="middle" xml:space="preserve">−2</text>
<text x="61.40" y="643.07" font-family="'DejaVu Sans','Liberation Sans',sans-serif" font-size="10.6" fill="#111" text-anchor="end" xml:space="preserve">−2</text>
<text x="143.50" y="695.70" font-family="'DejaVu Sans','Liberation Sans',sans-serif" font-size="10.6" fill="#111" text-anchor="middle" xml:space="preserve">0</text>
<text x="61.40" y="610.35" font-family="'DejaVu Sans','Liberation Sans',sans-serif" font-size="10.6" fill="#111" text-anchor="end" xml:space="preserve">0</text>
<text x="176.22" y="695.70" font-family="'DejaVu Sans','Liberation Sans',sans-serif" font-size="10.6" fill="#111" text-anchor="middle" xml:space="preserve">2</text>
<text x="61.40" y="577.63" font-family="'DejaVu Sans','Liberation Sans',sans-serif" font-size="10.6" fill="#111" text-anchor="end" xml:space="preserve">2</text>
<text x="208.94" y="695.70" font-family="'DejaVu Sans','Liberation Sans',sans-serif" font-size="10.6" fill="#111" text-anchor="middle" xml:space="preserve">4</text>
<text x="61.40" y="544.91" font-family="'DejaVu Sans','Liberation Sans',sans-serif" font-size="10.6" fill="#111" text-anchor="end" xml:space="preserve">4</text>
<path d="M78.6,680.4v3.6M69.8,671.9h-3.6M111.3,680.4v3.6M69.8,639.2h-3.6M144.0,680.4v3.6M69.8,606.5h-3.6M176.7,680.4v3.6M69.8,573.7h-3.6M209.4,680.4v3.6M69.8,541.0h-3.6" stroke="#222" stroke-width="0.9" fill="none"/>
<text x="144.00" y="525.10" font-family="'DejaVu Sans','Liberation Sans',sans-serif" font-size="12.9" fill="#111" text-anchor="middle" xml:space="preserve">Fiber Positions</text>
<text x="144.00" y="706.20" font-family="'DejaVu Sans','Liberation Sans',sans-serif" font-size="10.6" fill="#111" text-anchor="middle" xml:space="preserve">arcsecs</text>
</g>
<g id="p2">
<clipPath id="c2"><rect x="255.5" y="532.3" width="148.4" height="148.1"/></clipPath>
<g clip-path="url(#c2)">
<rect x="253.7" y="530.3" width="152" height="152.1" fill="#3f4788"/>
<polygon points="380.2,584.2 408.2,588.9 408.2,685.2 315.0,685.2 336.7,641.7 364.7,595.1" fill="#33658d" opacity="1" filter="url(#blur4)"/>
<polygon points="355.4,571.8 381.8,579.6 386.4,644.8 408.2,654.1 408.2,685.2 343.0,685.2 349.2,651.0" fill="#2d708e" opacity="0.9" filter="url(#blur2)"/>
<polygon points="340.6,529.9 367.0,529.9 381.0,550.1 370.1,571.8 374.0,610.6 356.9,652.6 333.6,655.7 318.1,685.2 252.9,685.2 252.9,653.3" fill="#27808e" opacity="1" filter="url(#blur1)"/>
<polygon points="340.6,529.9 350.7,529.9 265.3,651.0 252.9,666.5 252.9,653.3" fill="#1f9a8a" opacity="0.95" filter="url(#blur1)"/>
<polygon points="252.9,655.7 282.4,620.0 297.1,641.7 274.6,685.2 252.9,685.2" fill="#21918c" opacity="0.85" filter="url(#blur2)"/>
<polygon points="370.1,546.2 395.0,556.3 393.4,574.1 380.2,580.4 368.6,572.6" fill="#450a5e" opacity="0.95" filter="url(#blur2)"/>
<polygon points="384.1,606.0 396.5,609.9 396.5,640.1 384.1,642.5" fill="#47105f" opacity="0.85" filter="url(#blur2)"/>
<polygon points="350.7,667.3 371.7,668.9 368.6,685.2 348.4,685.2" fill="#46085c" opacity="0.9" filter="url(#blur2)"/>
<polygon points="252.9,656.4 272.3,661.9 277.0,685.2 252.9,685.2" fill="#440154" opacity="0.95" filter="url(#blur2)"/>
<polygon points="317.3,654.9 343.7,654.9 340.6,667.3 320.4,668.9" fill="#452f7a" opacity="0.85" filter="url(#blur2)"/>
<polygon points="307.2,640.1 315.8,642.5 303.4,685.2 292.5,685.2" fill="#44bf70" opacity="0.85" filter="url(#blur1)"/>
<polygon points="347.6,539.2 355.4,536.9 367.8,551.6 360.0,560.2" fill="#5ec962" opacity="0.9" filter="url(#blur1)"/>
<polygon points="355.4,547.8 361.6,547.8 363.1,554.7 357.7,556.3" fill="#bddf26" opacity="0.8" filter="url(#blur1)"/>
<polygon points="321.2,556.3 331.3,554.7 353.0,572.6 364.7,591.2 360.3,602.9 378.7,611.4 352.3,655.7 339.1,654.9 277.0,618.4 287.1,599.8" fill="#28ae80" opacity="1" filter="url(#blur1)"/>
<polygon points="322.0,559.7 330.2,558.3 350.7,574.1 361.3,592.0 356.9,604.4 374.8,612.2 350.7,651.8 339.9,651.0 280.8,617.6 289.9,601.6" fill="#7ad151" opacity="1" filter="url(#blur1)"/>
<polygon points="353.5,605.7 371.2,613.0 349.2,650.7 346.5,647.1 363.1,611.9" fill="#c8e020" opacity="1"/>
<polygon points="322.5,563.3 329.0,561.7 348.4,575.7 357.7,592.0 353.5,605.7 363.1,611.9 346.5,647.1 340.6,647.1 285.5,616.9 292.5,603.7" fill="#fde725" opacity="1"/>
</g>
<rect x="280.6" y="557.4" width="98.2" height="98.2" fill="none" stroke="#ff1010" stroke-width="1.5"/>
<path d="M292.6,606.45H322.0M337.4,606.45H366.8M329.7,569.3V598.8M329.7,614.1V643.6" stroke="#ff1010" stroke-width="1.1" fill="none"/>
<text x="329.70" y="545.90" font-family="'DejaVu Sans','Liberation Sans',sans-serif" font-size="10.8" fill="#ff0000" text-anchor="middle" xml:space="preserve">N</text>
<text x="266.00" y="610.35" font-family="'DejaVu Sans','Liberation Sans',sans-serif" font-size="10.8" fill="#ff0000" text-anchor="middle" xml:space="preserve">E</text>
<rect x="255.5" y="532.3" width="148.4" height="148.1" fill="none" stroke="#222" stroke-width="1.1"/>
<text x="263.76" y="695.70" font-family="'DejaVu Sans','Liberation Sans',sans-serif" font-size="10.6" fill="#111" text-anchor="middle" xml:space="preserve">−4</text>
<text x="247.10" y="675.79" font-family="'DejaVu Sans','Liberation Sans',sans-serif" font-size="10.6" fill="#111" text-anchor="end" xml:space="preserve">−4</text>
<text x="296.48" y="695.70" font-family="'DejaVu Sans','Liberation Sans',sans-serif" font-size="10.6" fill="#111" text-anchor="middle" xml:space="preserve">−2</text>
<text x="247.10" y="643.07" font-family="'DejaVu Sans','Liberation Sans',sans-serif" font-size="10.6" fill="#111" text-anchor="end" xml:space="preserve">−2</text>
<text x="329.20" y="695.70" font-family="'DejaVu Sans','Liberation Sans',sans-serif" font-size="10.6" fill="#111" text-anchor="middle" xml:space="preserve">0</text>
<text x="247.10" y="610.35" font-family="'DejaVu Sans','Liberation Sans',sans-serif" font-size="10.6" fill="#111" text-anchor="end" xml:space="preserve">0</text>
<text x="361.92" y="695.70" font-family="'DejaVu Sans','Liberation Sans',sans-serif" font-size="10.6" fill="#111" text-anchor="middle" xml:space="preserve">2</text>
<text x="247.10" y="577.63" font-family="'DejaVu Sans','Liberation Sans',sans-serif" font-size="10.6" fill="#111" text-anchor="end" xml:space="preserve">2</text>
<text x="394.64" y="695.70" font-family="'DejaVu Sans','Liberation Sans',sans-serif" font-size="10.6" fill="#111" text-anchor="middle" xml:space="preserve">4</text>
<text x="247.10" y="544.91" font-family="'DejaVu Sans','Liberation Sans',sans-serif" font-size="10.6" fill="#111" text-anchor="end" xml:space="preserve">4</text>
<path d="M264.3,680.4v3.6M255.5,671.9h-3.6M297.0,680.4v3.6M255.5,639.2h-3.6M329.7,680.4v3.6M255.5,606.5h-3.6M362.4,680.4v3.6M255.5,573.7h-3.6M395.1,680.4v3.6M255.5,541.0h-3.6" stroke="#222" stroke-width="0.9" fill="none"/>
<text x="329.70" y="525.10" font-family="'DejaVu Sans','Liberation Sans',sans-serif" font-size="12.9" fill="#111" text-anchor="middle" xml:space="preserve">Lineflux Map</text>
<text x="329.70" y="706.20" font-family="'DejaVu Sans','Liberation Sans',sans-serif" font-size="10.6" fill="#111" text-anchor="middle" xml:space="preserve">s/b: 6.47 +/- 0.102</text>
</g>
<g id="p3">
<clipPath id="c3"><rect x="440.5" y="532.3" width="148.4" height="148.1"/></clipPath>
<g clip-path="url(#c3)">
<rect x="440.5" y="532.3" width="148.4" height="148.1" filter="url(#nBg2)"/>
<ellipse cx="516.0" cy="603.5" rx="18.0" ry="44.0" fill="#000" opacity="0.22" filter="url(#blur4)"/>
<ellipse cx="516.0" cy="603.5" rx="13.5" ry="31.8" fill="#000" opacity="0.42" filter="url(#blur2)"/>
<ellipse cx="516.0" cy="603.5" rx="11.2" ry="23.4" fill="#000" opacity="0.7" filter="url(#blur2)"/>
<ellipse cx="516.0" cy="603.5" rx="9.0" ry="19.5" fill="#000" opacity="1.0" filter="url(#blur1)"/>
</g>
<rect x="465.6" y="557.4" width="98.2" height="98.2" fill="none" stroke="#ff1010" stroke-width="1.5"/>
<path d="M477.6,606.45H507.0M522.4,606.45H551.8M514.7,569.3V598.8M514.7,614.1V643.6" stroke="#ff1010" stroke-width="1.1" fill="none"/>
<text x="514.70" y="545.90" font-family="'DejaVu Sans','Liberation Sans',sans-serif" font-size="10.8" fill="#ff0000" text-anchor="middle" xml:space="preserve">N</text>
<text x="451.00" y="610.35" font-family="'DejaVu Sans','Liberation Sans',sans-serif" font-size="10.8" fill="#ff0000" text-anchor="middle" xml:space="preserve">E</text>
<ellipse cx="516.0" cy="600.4" rx="24.9" ry="57.0" fill="none" stroke="#ffd21e" stroke-width="1.3"/>
<rect x="509.4" y="594.5" width="13.2" height="12.1" fill="none" stroke="#0000ff" stroke-width="1.2"/>
<rect x="440.5" y="532.3" width="148.4" height="148.1" fill="none" stroke="#222" stroke-width="1.1"/>
<text x="448.76" y="695.70" font-family="'DejaVu Sans','Liberation Sans',sans-serif" font-size="10.6" fill="#111" text-anchor="middle" xml:space="preserve">−4</text>
<text x="432.10" y="675.79" font-family="'DejaVu Sans','Liberation Sans',sans-serif" font-size="10.6" fill="#111" text-anchor="end" xml:space="preserve">−4</text>
<text x="481.48" y="695.70" font-family="'DejaVu Sans','Liberation Sans',sans-serif" font-size="10.6" fill="#111" text-anchor="middle" xml:space="preserve">−2</text>
<text x="432.10" y="643.07" font-family="'DejaVu Sans','Liberation Sans',sans-serif" font-size="10.6" fill="#111" text-anchor="end" xml:space="preserve">−2</text>
<text x="514.20" y="695.70" font-family="'DejaVu Sans','Liberation Sans',sans-serif" font-size="10.6" fill="#111" text-anchor="middle" xml:space="preserve">0</text>
<text x="432.10" y="610.35" font-family="'DejaVu Sans','Liberation Sans',sans-serif" font-size="10.6" fill="#111" text-anchor="end" xml:space="preserve">0</text>
<text x="546.92" y="695.70" font-family="'DejaVu Sans','Liberation Sans',sans-serif" font-size="10.6" fill="#111" text-anchor="middle" xml:space="preserve">2</text>
<text x="432.10" y="577.63" font-family="'DejaVu Sans','Liberation Sans',sans-serif" font-size="10.6" fill="#111" text-anchor="end" xml:space="preserve">2</text>
<text x="579.64" y="695.70" font-family="'DejaVu Sans','Liberation Sans',sans-serif" font-size="10.6" fill="#111" text-anchor="middle" xml:space="preserve">4</text>
<text x="432.10" y="544.91" font-family="'DejaVu Sans','Liberation Sans',sans-serif" font-size="10.6" fill="#111" text-anchor="end" xml:space="preserve">4</text>
<path d="M449.3,680.4v3.6M440.5,671.9h-3.6M482.0,680.4v3.6M440.5,639.2h-3.6M514.7,680.4v3.6M440.5,606.5h-3.6M547.4,680.4v3.6M440.5,573.7h-3.6M580.1,680.4v3.6M440.5,541.0h-3.6" stroke="#222" stroke-width="0.9" fill="none"/>
<text x="514.70" y="525.10" font-family="'DejaVu Sans','Liberation Sans',sans-serif" font-size="12.9" fill="#111" text-anchor="middle" xml:space="preserve">HSC(26.2) r</text>
<text x="514.70" y="706.20" font-family="'DejaVu Sans','Liberation Sans',sans-serif" font-size="10.6" fill="#111" text-anchor="middle" xml:space="preserve">m:20.2  re:2.3"  s:0.4"</text>
<text x="515.70" y="718.70" font-family="'DejaVu Sans','Liberation Sans',sans-serif" font-size="10.6" fill="#111" text-anchor="middle" xml:space="preserve">EWr: 4, PLAE: 0.003</text>
</g>
</svg>
</body></html>
